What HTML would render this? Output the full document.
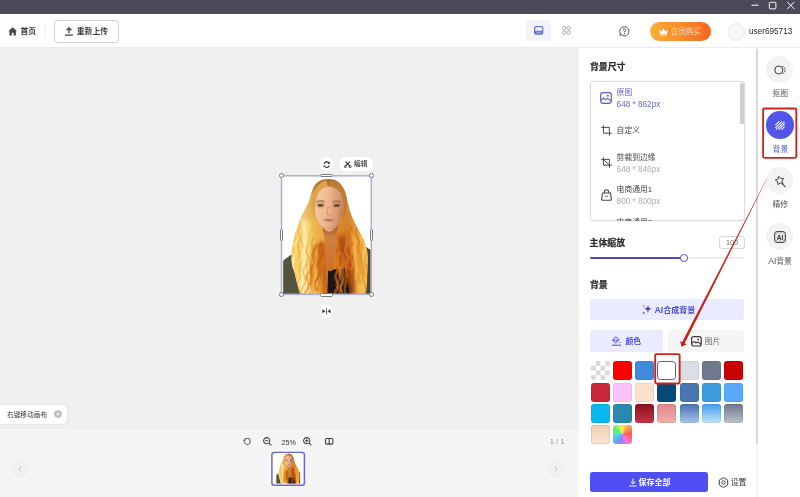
<!DOCTYPE html>
<html lang="zh-CN">
<head>
<meta charset="utf-8">
<title>抠图 - 背景</title>
<style>
*{box-sizing:border-box;margin:0;padding:0}
html,body{width:800px;height:497px;overflow:hidden;background:#f0f0f0}
body{position:relative;will-change:transform;font-family:"Liberation Sans","Noto Sans CJK SC",sans-serif;font-size:7.8px;color:#333;line-height:1}
.abs{position:absolute}
.t{position:absolute;white-space:nowrap;line-height:1;margin-top:.8px}
svg{position:absolute;overflow:visible}
/* frame */
#titlebar{left:0;top:0;width:800px;height:14px;background:#4a4a59}
#header{left:0;top:14px;width:800px;height:34px;background:#fff;border-bottom:1px solid #ebebeb}
#canvas{left:0;top:48px;width:579px;height:379.5px;background:#f0f0f0}
#bottombar{left:0;top:427.5px;width:579px;height:70px;background:#f5f5f5;border-top:1px solid #ededed}
#panel{left:579px;top:48px;width:178px;height:449px;background:#fff}
#sidebar{left:757px;top:48px;width:43px;height:449px;background:#fff;border-left:1px solid #efefef}
.b{font-weight:bold}
.h{font-size:8.9px;font-weight:bold;color:#2b2b2b;-webkit-text-stroke:.22px #2b2b2b;margin-left:-.4px;margin-top:.45px}
.purple{color:#6468c8}
.gray{color:#aaa}
.hd{width:4.8px;height:4.8px;border-radius:50%;background:#fff;border:.8px solid #777}
.hp{background:#fff;border:.8px solid #777;border-radius:1.6px}
</style>
</head>
<body>
<div class="abs" id="titlebar"></div>
<div class="abs" id="header"></div>
<div class="abs" id="canvas"></div>
<div class="abs" id="bottombar"></div>
<div class="abs" id="panel"></div>
<div class="abs" id="sidebar"></div>

<!-- ============ TITLE BAR CONTROLS ============ -->
<svg style="left:748px;top:0" width="52" height="14" viewBox="0 0 52 14">
  <path d="M3.5 5.2H10.5" stroke="#fff" stroke-width="1" fill="none"/>
  <rect x="21.3" y="2.3" width="6.6" height="6.6" rx="1" stroke="#fff" stroke-width="1" fill="none"/>
  <path d="M39.2 1.8L46.4 9M46.4 1.8L39.2 9" stroke="#fff" stroke-width="1" fill="none"/>
</svg>

<!-- ============ HEADER ============ -->
<svg style="left:8.3px;top:27px" width="9.3" height="9" viewBox="0 0 9 9">
  <path d="M4.5 0.2L0.1 4.2H1.3V8.6H3.6V5.8H5.4V8.6H7.7V4.2H8.9Z" fill="#444"/>
</svg>
<div class="t b" style="left:20.5px;top:27.4px;color:#3a3a3a">首页</div>
<div class="abs" style="left:45px;top:25px;width:1px;height:13px;background:#f0f0f0"></div>
<div class="abs" style="left:53.8px;top:20px;width:64.8px;height:22.5px;border:1px solid #d0d0d0;border-radius:3.5px;background:#fff"></div>
<svg style="left:65px;top:27px" width="8" height="9" viewBox="0 0 8 9">
  <path d="M4 6.2V0.9M1.5 3.3L4 0.8L6.5 3.3M0 8.2H8" stroke="#3c3c3c" stroke-width="1.25" fill="none"/>
</svg>
<div class="t b" style="left:76.8px;top:27.4px;color:#3a3a3a">重新上传</div>

<!-- view toggles -->
<div class="abs" style="left:526px;top:20.3px;width:24.7px;height:20.5px;background:#f3f4fa;border-radius:2.5px"></div>
<svg style="left:533.8px;top:26.2px" width="9.4" height="8.8" viewBox="0 0 9.4 8.8">
  <rect x=".65" y=".65" width="8.1" height="7.4" rx="1.4" stroke="#6a6ecb" stroke-width="1.2" fill="none"/>
  <rect x=".65" y="4.7" width="8.1" height="3.4" fill="#6a6ecb"/>
  <path d="M3 5.6V7.4M4.7 5.6V7.4M6.4 5.6V7.4" stroke="#eceefa" stroke-width=".6"/>
</svg>
<svg style="left:562.1px;top:26.4px" width="9" height="9" viewBox="0 0 9 9">
  <g stroke="#9a9a9a" stroke-width=".8" fill="none">
    <circle cx="2.2" cy="2.2" r="1.7"/><circle cx="6.6" cy="2.2" r="1.7"/>
    <circle cx="2.2" cy="6.6" r="1.7"/><circle cx="6.6" cy="6.6" r="1.7"/>
  </g>
</svg>
<!-- help -->
<svg style="left:619.1px;top:26.1px" width="11" height="11" viewBox="0 0 11 11">
  <path d="M5.5 0.7A4.6 4.6 0 1 1 2.3 8.7L0.9 9.6L1.4 7.7A4.6 4.6 0 0 1 5.5 0.7Z" stroke="#444" stroke-width=".9" fill="none"/>
  <path d="M4.2 4.2A1.3 1.3 0 1 1 5.5 5.5V6.3" stroke="#444" stroke-width=".9" fill="none"/>
  <circle cx="5.5" cy="7.6" r=".55" fill="#444"/>
</svg>
<!-- vip button -->
<div class="abs" style="left:649.5px;top:22px;width:61px;height:18.5px;border-radius:9.5px;background:linear-gradient(90deg,#fbae38 0%,#f98c2a 50%,#f5661e 100%)"></div>
<svg style="left:658.5px;top:27.5px" width="9" height="8" viewBox="0 0 9 8">
  <path d="M0.3 1.8L2.4 3.6L4.5 0.6L6.6 3.6L8.7 1.8L7.8 6H1.2Z" fill="#fff"/>
  <rect x="1.2" y="6.5" width="6.6" height=".9" fill="#fff"/>
</svg>
<div class="t" style="left:670.5px;top:27.5px;color:rgba(255,255,255,.95);font-size:7.7px;font-weight:300">会员购买</div>
<!-- avatar -->
<div class="abs" style="left:727.5px;top:23px;width:17.5px;height:17.5px;border-radius:50%;background:#f5f5f5;border:1px solid #ebebeb"></div>
<svg style="left:731px;top:27px" width="11" height="10" viewBox="0 0 11 10">
  <path d="M5.5 0.8C8.2 0.8 10 2.6 10 5C10 7.4 8.2 9 5.5 9C2.8 9 1 7.4 1 5C1 2.6 2.8 0.8 5.5 0.8Z" stroke="#fff" stroke-width=".9" fill="none"/>
  <path d="M3.2 5.3L4.2 4.3L5.5 5.4L6.8 4.3L7.8 5.3" stroke="#fff" stroke-width=".8" fill="none"/>
</svg>
<div class="t" style="left:749px;top:27.2px;font-size:8.2px;color:#262626">user695713</div>

<!-- ============ RIGHT PANEL ============ -->
<div class="t h" style="left:590.4px;top:62.8px">背景尺寸</div>
<div class="abs" style="left:589.8px;top:81.2px;width:154.8px;height:140px;border:1px solid #dcdcdc;border-radius:3px;background:#fff;overflow:hidden;box-shadow:0 0 2px rgba(0,0,0,.08)"></div>
<div class="abs" style="left:740.4px;top:83.4px;width:3.4px;height:40.6px;background:#cfcfcf;border-radius:2px 2px 0 0"></div>
<!-- item1 -->
<svg style="left:600.4px;top:92.2px" width="12" height="12" viewBox="0 0 12 12">
  <rect x=".7" y=".7" width="10.6" height="10.6" rx="2.2" stroke="#5a5ec4" stroke-width="1.2" fill="none"/>
  <path d="M.9 8.4L3.6 6L5.6 7.8L7.6 6.4L11 9" stroke="#5a5ec4" stroke-width="1.1" fill="none"/>
  <circle cx="7.9" cy="3.8" r="1" fill="#5a5ec4"/>
</svg>
<div class="t purple" style="left:616.6px;top:88.3px">原图</div>
<div class="t purple" style="left:616.6px;top:100.2px;font-size:8.2px">648 * 862px</div>
<!-- item2 -->
<svg style="left:600.6px;top:125px" width="11" height="11" viewBox="0 0 11 11">
  <path d="M2.4 0.2V8.2H10.8M0.2 2.4H8.4V10.8" stroke="#4a4a4a" stroke-width="1" fill="none"/>
</svg>
<div class="t" style="left:616.6px;top:126.6px;color:#444">自定义</div>
<!-- item3 -->
<svg style="left:600.6px;top:157.4px" width="11" height="11" viewBox="0 0 11 11">
  <path d="M2.4 0.2V8.2H10.8M0.2 2.4H8.4V10.8M2.6 2.6L8.2 8" stroke="#4a4a4a" stroke-width="1" fill="none"/>
</svg>
<div class="t" style="left:616.6px;top:153px;color:#444">剪裁到边缘</div>
<div class="t gray" style="left:616.6px;top:164.9px;font-size:8.2px">648 * 846px</div>
<!-- item4 -->
<svg style="left:600.6px;top:189.2px" width="11" height="12" viewBox="0 0 11 12">
  <path d="M1.6 4H9.4L10.4 10.2A1 1 0 0 1 9.4 11.3H1.6A1 1 0 0 1 .6 10.2Z" stroke="#444" stroke-width="1.1" fill="none"/>
  <path d="M3.4 4V2.8A2.1 2.1 0 0 1 7.6 2.8V4" stroke="#444" stroke-width="1.1" fill="none"/>
  <path d="M3.8 6.8Q5.5 8.6 7.2 6.8" stroke="#444" stroke-width=".9" fill="none"/>
</svg>
<div class="t" style="left:616.6px;top:185.4px;color:#444">电商通用1</div>
<div class="t gray" style="left:616.6px;top:197.3px;font-size:8.2px">800 * 800px</div>
<!-- item5 (clipped) -->
<div class="abs" style="left:616.6px;top:217px;width:60px;height:3.6px;overflow:hidden"><div class="t" style="left:0;top:1.1px;color:#444">电商通用2</div></div>

<!-- scale -->
<div class="t h" style="left:590px;top:238.4px">主体缩放</div>
<div class="abs" style="left:719.2px;top:236.2px;width:25.4px;height:12.8px;border:1px solid #d6d6d6;border-radius:3px;background:#fff"></div>
<div class="t" style="left:726px;top:238.2px;font-size:7.2px;color:#707070">100</div>
<div class="abs" style="left:590px;top:257.2px;width:154.4px;height:1.8px;background:#ececec;border-radius:1px"></div>
<div class="abs" style="left:590px;top:257px;width:92px;height:2.2px;background:#4a4eb4;border-radius:1px"></div>
<div class="abs" style="left:680.4px;top:254.2px;width:7.6px;height:7.6px;border-radius:50%;background:#fff;border:1.1px solid #4a4eb4"></div>

<!-- background -->
<div class="t h" style="left:590.4px;top:280.4px">背景</div>
<div class="abs" style="left:589.9px;top:299.1px;width:154.2px;height:20.8px;background:#ebebff;border-radius:2px"></div>
<svg style="left:641.6px;top:304.4px" width="10" height="11" viewBox="0 0 10 11">
  <path d="M6 0.2C6.35 3.3 7.1 4.1 10 4.8C7.1 5.5 6.35 6.3 6 9.4C5.65 6.3 4.9 5.5 2 4.8C4.9 4.1 5.65 3.3 6 0.2Z" fill="#4a4ad2"/>
  <path d="M1.7 7.2C1.8 8.3 2.2 8.7 3.3 8.9C2.2 9.1 1.8 9.5 1.7 10.6C1.6 9.5 1.2 9.1 .1 8.9C1.2 8.7 1.6 8.3 1.7 7.2Z" fill="#4a4ad2"/>
  <circle cx="1.7" cy="2" r=".7" fill="#4a4ad2"/>
</svg>
<div class="t b" style="left:654.4px;top:305.6px;font-size:8px;color:#4a4ad2"><span style="font-size:8.8px">AI</span>合成背景</div>
<!-- tabs -->
<div class="abs" style="left:589.9px;top:329.9px;width:72.8px;height:22px;background:#ebebff;border-radius:2px"></div>
<div class="abs" style="left:667.5px;top:329.9px;width:76.6px;height:22px;background:#f5f5f6;border-radius:2px"></div>
<svg style="left:612.4px;top:336.4px" width="9" height="10" viewBox="0 0 9 10">
  <path d="M3.9 0.6L7 3.8L3.6 7.1L0.6 4.1L3.9 .9" stroke="#4a4ad2" stroke-width="1" fill="none"/>
  <path d="M.8 4.2H6.6" stroke="#4a4ad2" stroke-width=".9"/>
  <path d="M8 5.4C8.6 6.4 8.7 6.8 8 7.2C7.3 6.8 7.4 6.4 8 5.4Z" fill="#4a4ad2"/>
  <path d="M0 9.2H9" stroke="#4a4ad2" stroke-width="1"/>
</svg>
<div class="t b" style="left:625.5px;top:337.2px;color:#4a4ad2">颜色</div>
<svg style="left:691.2px;top:335.6px" width="11" height="11" viewBox="0 0 11 11">
  <rect x=".6" y=".6" width="9.6" height="9.4" rx="2" stroke="#3a3a3a" stroke-width="1.2" fill="none"/>
  <path d="M.8 7.4L3.2 5.4L5 7L6.8 5.8L10 8.2" stroke="#3a3a3a" stroke-width="1.1" fill="none"/>
  <circle cx="7.2" cy="3.4" r=".9" fill="#444"/>
</svg>
<div class="t" style="left:704.8px;top:337.2px;color:#6a6a6a">图片</div>
<!-- swatches -->
<div class="abs" style="left:591.2px;top:361.3px;width:19px;height:19px;border-radius:3.2px;background:#fff conic-gradient(#d9d9d9 25%,#fff 0 50%,#d9d9d9 0 75%,#fff 0) 0 0/9.5px 9.5px"></div>
<div class="abs" style="left:613.3px;top:361.3px;width:19px;height:19px;border-radius:3.2px;background:#ff0000;box-shadow:inset 0 0 0 .5px rgba(0,0,0,.12)"></div>
<div class="abs" style="left:635.3px;top:361.3px;width:19px;height:19px;border-radius:3.2px;background:#3e8bd9;box-shadow:inset 0 0 0 .5px rgba(0,0,0,.12)"></div>
<div class="abs" style="left:657.4px;top:361.3px;width:19px;height:19px;border-radius:3.2px;background:#fff;border:1px solid #5656cc"></div>
<div class="abs" style="left:679.5px;top:361.3px;width:19px;height:19px;border-radius:3.2px;background:#dddde5;box-shadow:inset 0 0 0 .5px rgba(0,0,0,.12)"></div>
<div class="abs" style="left:701.6px;top:361.3px;width:19px;height:19px;border-radius:3.2px;background:#6f788d;box-shadow:inset 0 0 0 .5px rgba(0,0,0,.12)"></div>
<div class="abs" style="left:723.6px;top:361.3px;width:19px;height:19px;border-radius:3.2px;background:#c90000;box-shadow:inset 0 0 0 .5px rgba(0,0,0,.12)"></div>
<div class="abs" style="left:591.2px;top:382.6px;width:19px;height:19px;border-radius:3.2px;background:#c82737;box-shadow:inset 0 0 0 .5px rgba(0,0,0,.12)"></div>
<div class="abs" style="left:613.3px;top:382.6px;width:19px;height:19px;border-radius:3.2px;background:#ffc1ff;box-shadow:inset 0 0 0 .5px rgba(0,0,0,.12)"></div>
<div class="abs" style="left:635.3px;top:382.6px;width:19px;height:19px;border-radius:3.2px;background:#fde1cd;box-shadow:inset 0 0 0 .5px rgba(0,0,0,.12)"></div>
<div class="abs" style="left:657.4px;top:382.6px;width:19px;height:19px;border-radius:3.2px;background:#03497a;box-shadow:inset 0 0 0 .5px rgba(0,0,0,.12)"></div>
<div class="abs" style="left:679.5px;top:382.6px;width:19px;height:19px;border-radius:3.2px;background:#4876b2;box-shadow:inset 0 0 0 .5px rgba(0,0,0,.12)"></div>
<div class="abs" style="left:701.6px;top:382.6px;width:19px;height:19px;border-radius:3.2px;background:#3b9bdd;box-shadow:inset 0 0 0 .5px rgba(0,0,0,.12)"></div>
<div class="abs" style="left:723.6px;top:382.6px;width:19px;height:19px;border-radius:3.2px;background:#59a9fd;box-shadow:inset 0 0 0 .5px rgba(0,0,0,.12)"></div>
<div class="abs" style="left:591.2px;top:403.9px;width:19px;height:19px;border-radius:3.2px;background:#07b9ee;box-shadow:inset 0 0 0 .5px rgba(0,0,0,.12)"></div>
<div class="abs" style="left:613.3px;top:403.9px;width:19px;height:19px;border-radius:3.2px;background:#2989b1;box-shadow:inset 0 0 0 .5px rgba(0,0,0,.12)"></div>
<div class="abs" style="left:635.3px;top:403.9px;width:19px;height:19px;border-radius:3.2px;background:linear-gradient(180deg,#8a0f1e,#c83444);box-shadow:inset 0 0 0 .5px rgba(0,0,0,.12)"></div>
<div class="abs" style="left:657.4px;top:403.9px;width:19px;height:19px;border-radius:3.2px;background:linear-gradient(180deg,#e0858c,#f3adad);box-shadow:inset 0 0 0 .5px rgba(0,0,0,.12)"></div>
<div class="abs" style="left:679.5px;top:403.9px;width:19px;height:19px;border-radius:3.2px;background:linear-gradient(180deg,#4770b2,#a6c4ea);box-shadow:inset 0 0 0 .5px rgba(0,0,0,.12)"></div>
<div class="abs" style="left:701.6px;top:403.9px;width:19px;height:19px;border-radius:3.2px;background:linear-gradient(180deg,#3f9fe8,#c6e3fd);box-shadow:inset 0 0 0 .5px rgba(0,0,0,.12)"></div>
<div class="abs" style="left:723.6px;top:403.9px;width:19px;height:19px;border-radius:3.2px;background:linear-gradient(180deg,#6e768a,#bcc0cc);box-shadow:inset 0 0 0 .5px rgba(0,0,0,.12)"></div>
<div class="abs" style="left:591.2px;top:425.2px;width:19px;height:19px;border-radius:3.2px;background:linear-gradient(180deg,#efd0b2,#fde6d4);box-shadow:inset 0 0 0 .6px rgba(120,80,50,.28)"></div>
<div class="abs" style="left:613.3px;top:425.2px;width:19px;height:19px;border-radius:3.2px;background:conic-gradient(from 0deg at 50% 48%,#ffe860 0deg,#ff9c50 40deg,#ff5a5a 90deg,#ff7ad8 150deg,#a07aff 190deg,#5aa8ff 225deg,#5ae0d0 265deg,#5af07a 305deg,#c8f860 340deg,#ffe860 360deg)"></div>
<!-- save -->
<div class="abs" style="left:589.9px;top:471.7px;width:118.4px;height:20.4px;background:#4f4ff4;border-radius:2.5px"></div>
<svg style="left:629px;top:478px" width="8" height="9" viewBox="0 0 8 9">
  <path d="M4 0.4V5.8M1.6 3.6L4 6L6.4 3.6M0.4 8H7.6" stroke="#fff" stroke-width="1" fill="none"/>
</svg>
<div class="t b" style="left:638.4px;top:477.8px;color:#fff;font-size:8px">保存全部</div>
<svg style="left:718px;top:477px" width="11" height="11" viewBox="0 0 11 11">
  <path d="M5.5 0.6L9.7 3V8L5.5 10.4L1.3 8V3Z" stroke="#444" stroke-width="1" fill="none" stroke-linejoin="round"/>
  <circle cx="5.5" cy="5.5" r="1.7" stroke="#444" stroke-width="1" fill="none"/>
</svg>
<div class="t" style="left:730.8px;top:478px;color:#333">设置</div>
<!-- panel scrollbar -->
<div class="abs" style="left:755.6px;top:48.5px;width:2.1px;height:395.5px;background:#d9d9d9"></div>

<!-- ============ SIDEBAR ============ -->
<!-- item1 抠图 -->
<div class="abs" style="left:766.1px;top:55.5px;width:27.4px;height:27.4px;border-radius:50%;background:#f3f3f5"></div>
<svg style="left:773.6px;top:64.6px" width="13" height="10" viewBox="0 0 13 10">
  <circle cx="4.8" cy="5" r="4" stroke="#3a3a3a" stroke-width="1" fill="none"/>
  <path d="M8.2 1.2A4 4 0 0 1 8.2 8.8" stroke="#3a3a3a" stroke-width=".9" fill="none" stroke-dasharray="1.6 1"/>
  <path d="M10.6 2.4A4 4 0 0 1 10.6 7.6" stroke="#8a8a8a" stroke-width=".7" fill="none" stroke-dasharray="1.2 1"/>
</svg>
<div class="t" style="left:772.4px;top:89px;color:#555">抠图</div>
<!-- item2 背景 (active) -->
<div class="abs" style="left:766.2px;top:111.4px;width:27.4px;height:27.4px;border-radius:50%;background:#5355e8"></div>
<svg style="left:775px;top:120.9px" width="10" height="9.1" viewBox="0 0 11 10">
  <path d="M.4 4.6L4.6 .4M.4 7.6L7.6 .4M1.2 9.6L10.4 .6M4 9.6L10.6 3M7 9.6L10.6 6" stroke="#f4f4ff" stroke-width="1.15" fill="none"/>
</svg>
<div class="t" style="left:772.6px;top:145.2px;color:#5a60c8">背景</div>
<!-- item3 精修 -->
<div class="abs" style="left:766.1px;top:167.1px;width:27.4px;height:27.4px;border-radius:50%;background:#f3f3f5"></div>
<svg style="left:774.6px;top:175.6px" width="11" height="12" viewBox="0 0 11 12">
  <path d="M3.79 0.30L5.66 2.45L8.51 2.40L7.04 4.85L7.97 7.54L5.19 6.90L2.91 8.62L2.66 5.78L0.32 4.14L2.95 3.03Z" stroke="#3a3a3a" stroke-width=".95" fill="none" stroke-linejoin="round"/>
  <path d="M7.2 7.8L10.2 10.6" stroke="#3a3a3a" stroke-width="1.05" fill="none" stroke-linecap="round"/>
</svg>
<div class="t" style="left:772.4px;top:200.6px;color:#555">精修</div>
<!-- item4 AI背景 -->
<div class="abs" style="left:766.1px;top:222.8px;width:27.4px;height:27.4px;border-radius:50%;background:#f3f3f5"></div>
<svg style="left:773.6px;top:230.6px" width="12" height="12" viewBox="0 0 12 12">
  <rect x=".6" y=".6" width="10.8" height="10.8" rx="2.4" stroke="#3a3a3a" stroke-width="1" fill="none"/>
  <path d="M1 4.4L4.4 1M1 7.6L7.6 1M1.6 10.6L10.6 1.6M4.6 11L11 4.6M7.8 11L11 7.8" stroke="#6a6a6a" stroke-width=".6" fill="none"/>
  <rect x="2.2" y="3.4" width="7.6" height="5.4" fill="#f3f3f5" opacity=".75"/>
  <text x="6" y="8.5" font-family="Liberation Sans,sans-serif" font-size="6.6" font-weight="bold" text-anchor="middle" fill="#333">AI</text>
</svg>
<div class="t" style="left:768.2px;top:255.8px;color:#555"><span style="font-size:8.6px">AI</span>背景</div>
<!-- red highlight on item2 -->
<svg style="left:0;top:0" width="800" height="497" viewBox="0 0 800 497"><rect x="763.1" y="108.5" width="33.2" height="49.3" rx="1.2" fill="none" stroke="#cf221d" stroke-width="1.8"/></svg>

<!-- ============ CANVAS ============ -->
<div class="abs" style="left:319.5px;top:157.3px;width:13.8px;height:13.8px;border-radius:50%;background:#fff"></div>
<svg style="left:322.7px;top:160.7px" width="7.4" height="7.4" viewBox="0 0 8 8">
  <path d="M1.15 3.1A3 3 0 0 1 6.5 2.3M6.85 4.9A3 3 0 0 1 1.5 5.7" stroke="#2e2e2e" stroke-width="1.25" fill="none"/>
  <path d="M7.3 .9V3.2H5ZM.7 7.1V4.8H3Z" fill="#2e2e2e"/>
</svg>
<div class="abs" style="left:338.9px;top:157.3px;width:34.3px;height:13.8px;border-radius:7px;background:#fff"></div>
<svg style="left:344.2px;top:160.6px" width="7.4" height="7" viewBox="0 0 7.4 7">
  <path d="M1.4 .6L5.8 4.9M6 .6L1.6 4.9" stroke="#2e2e2e" stroke-width="1.15" fill="none"/>
  <circle cx="1.3" cy="5.6" r="1" stroke="#2e2e2e" stroke-width=".9" fill="none"/>
  <circle cx="6.1" cy="5.6" r="1" stroke="#2e2e2e" stroke-width=".9" fill="none"/>
</svg>
<div class="t" style="left:354.1px;top:160.7px;font-size:6.7px;color:#2e2e2e;font-weight:500">编辑</div>
<!--P1--><svg style="left:281.5px;top:175.7px" width="89.8" height="118.6" viewBox="0 0 90 118.6" preserveAspectRatio="none">
<defs>
<filter id="bla" x="-5%" y="-5%" width="110%" height="110%"><feGaussianBlur stdDeviation="0.7"/></filter>
<filter id="sfa" x="-30%" y="-30%" width="160%" height="160%"><feGaussianBlur stdDeviation="2.2"/></filter>
<clipPath id="cpa"><rect x="0" y="0" width="90" height="118.6"/></clipPath>
<clipPath id="hca"><path d="M44.2 3.3C39.5 3.6 35 6 32.4 10C30 14.6 28.6 19.6 27.4 24.5C26 28.4 23.6 31.6 21.8 35.7C20 40 17.6 43.6 16.4 48.3C15 53 13.6 55.6 12.8 59.4C11.8 64 11 67.6 10.4 71.5C9.6 76 9.4 79 9.6 84C9.8 89 11 92 12.4 96C13.6 101 14.6 105 15.6 109C16.6 113 17.6 116 18.5 118.6H84C84.6 112 85.4 106 85.4 100C85.6 92 86.6 82 85.4 75C84.4 70 82.4 65 80.4 61.3C78.4 57 75.8 53 74 49.3C71.8 45 70 41 68.6 36.7C67.2 32 66.2 28 65.2 24.3C64.2 20 63.4 17 62 14C60.4 10 57.6 6.4 54 4.6C51 3.2 48 3 44.2 3.3Z"/></clipPath>
<linearGradient id="hga" x1="0" y1="0" x2="1" y2="0">
<stop offset="0" stop-color="#f9de8c"/><stop offset=".24" stop-color="#f6cc62"/><stop offset=".36" stop-color="#f0b044"/><stop offset=".5" stop-color="#e4942e"/><stop offset=".62" stop-color="#d0741e"/><stop offset=".76" stop-color="#c8681a"/><stop offset=".86" stop-color="#ea9e34"/><stop offset="1" stop-color="#f4bc54"/>
</linearGradient>
<linearGradient id="tga" x1="0" y1="0" x2="0" y2="1">
<stop offset="0" stop-color="#a8652a" stop-opacity=".95"/><stop offset=".16" stop-color="#cf9344" stop-opacity=".85"/><stop offset=".4" stop-color="#e6ad50" stop-opacity=".35"/><stop offset=".7" stop-color="#e0a040" stop-opacity="0"/>
</linearGradient>
<linearGradient id="ska" x1="0" y1="0" x2="1" y2=".2">
<stop offset="0" stop-color="#f6cba6"/><stop offset=".5" stop-color="#efb892"/><stop offset="1" stop-color="#cf8d66"/>
</linearGradient>
<linearGradient id="nka" x1="0" y1="0" x2="0" y2="1">
<stop offset="0" stop-color="#9c5226"/><stop offset=".3" stop-color="#d08040"/><stop offset="1" stop-color="#c87030"/>
</linearGradient>
</defs>
<rect x="0" y="0" width="90" height="118.6" fill="#fff"/>
<g clip-path="url(#cpa)"><g filter="url(#bla)">
<path d="M1.2 84.5L8 79.5L15 76L22 84L26 118.6H1.2Z" fill="#55523e"/>
<path d="M83 70L88.8 74V118.6H80Z" fill="#48452f"/>
<path d="M44.2 3.3C39.5 3.6 35 6 32.4 10C30 14.6 28.6 19.6 27.4 24.5C26 28.4 23.6 31.6 21.8 35.7C20 40 17.6 43.6 16.4 48.3C15 53 13.6 55.6 12.8 59.4C11.8 64 11 67.6 10.4 71.5C9.6 76 9.4 79 9.6 84C9.8 89 11 92 12.4 96C13.6 101 14.6 105 15.6 109C16.6 113 17.6 116 18.5 118.6H84C84.6 112 85.4 106 85.4 100C85.6 92 86.6 82 85.4 75C84.4 70 82.4 65 80.4 61.3C78.4 57 75.8 53 74 49.3C71.8 45 70 41 68.6 36.7C67.2 32 66.2 28 65.2 24.3C64.2 20 63.4 17 62 14C60.4 10 57.6 6.4 54 4.6C51 3.2 48 3 44.2 3.3Z" fill="url(#hga)"/>
<path d="M44.2 3.3C39.5 3.6 35 6 32.4 10C30 14.6 28.6 19.6 27.4 24.5C26 28.4 23.6 31.6 21.8 35.7C20 40 17.6 43.6 16.4 48.3C15 53 13.6 55.6 12.8 59.4C11.8 64 11 67.6 10.4 71.5C9.6 76 9.4 79 9.6 84C9.8 89 11 92 12.4 96C13.6 101 14.6 105 15.6 109C16.6 113 17.6 116 18.5 118.6H84C84.6 112 85.4 106 85.4 100C85.6 92 86.6 82 85.4 75C84.4 70 82.4 65 80.4 61.3C78.4 57 75.8 53 74 49.3C71.8 45 70 41 68.6 36.7C67.2 32 66.2 28 65.2 24.3C64.2 20 63.4 17 62 14C60.4 10 57.6 6.4 54 4.6C51 3.2 48 3 44.2 3.3Z" fill="url(#tga)"/>
<g clip-path="url(#hca)"><g filter="url(#sfa)">
<path d="M16 46C13 60 10 76 10 90C11 100 14 110 19 118.6H31C27 106 26 92 28 78C29 66 27 56 25 42Z" fill="#fdeeb0" opacity=".85"/>
<path d="M24 14C21 24 19 34 20 44C23 40 26 30 31 18Z" fill="#f6d282" opacity=".8"/>
<path d="M72 56C78 62 84 70 87 80V118.6H74C76 104 75 90 72 80C70 70 70 62 72 56Z" fill="#f8c458" opacity=".8"/>
<path d="M36 66C34 78 35 90 38 100C40 108 40 114 40 118.6H48C47 108 46.4 99 46 91C45.4 82 45 74 44 66Z" fill="#b8500f" opacity=".75"/>
<path d="M55 62C55 72 56 80 58 88C60 96 62 104 62 118.6H74C75 104 73 92 70 82C67 74 65 66 64 58Z" fill="#aa4410" opacity=".8"/>
<path d="M62 90C66 98 70 106 71 118.6H63C63 108 61 98 59 92Z" fill="#4a2008" opacity=".6"/>
</g></g>
<path d="M46.2 95L50 93.6L63 92.4L68 118.6H45.5Z" fill="#1b1814"/>
<path d="M39.6 47L43.6 66L46.4 92L48.4 95.4L52 93.6L53 68L56.4 47Z" fill="url(#nka)"/>
<path d="M35 17C37.6 12.6 41.8 10.4 46.6 10.4C51.8 10.4 56.6 12.6 59 17C61 21 61.4 26 61.2 31C61 36 60.2 41 57.8 46C55.6 50 52 54.8 47.4 55.8C43.4 55.2 39.8 51 37.2 46.6C34.4 42 33 37 32.4 32C31.8 26 32.6 21 35 17Z" fill="url(#ska)"/>
<path d="M44 4C38 6 33 12 31 20C29.6 28 30.2 36 32.4 44C32.8 36 33 28 34.8 21C36.8 15 41 11.4 46 10Z" fill="#dda24e"/>
<path d="M48 4C56 5 62 10 64 18C65.6 26 64.8 36 61.2 46C61.8 38 62.2 30 61 23C59.8 16 55 11.4 47 10Z" fill="#bf7a36"/>
<ellipse cx="38.8" cy="28.6" rx="4.6" ry="2.8" fill="#b47a50" opacity=".38"/>
<ellipse cx="55" cy="29" rx="4.6" ry="2.8" fill="#b47a50" opacity=".42"/>
<path d="M57 34C59 38 58 44 54 50C58 46 61 40 61 32Z" fill="#b87850" opacity=".5"/>
<path d="M34.4 25.8Q38.4 23.8 42.8 25.6" stroke="#94643c" stroke-width="1.1" fill="none"/>
<path d="M50.8 25.8Q55.2 24 59.2 26" stroke="#94643c" stroke-width="1.1" fill="none"/>
<ellipse cx="38.6" cy="29.4" rx="3" ry="1.5" fill="#59402c"/>
<ellipse cx="55" cy="29.8" rx="3" ry="1.5" fill="#59402c"/>
<ellipse cx="38.6" cy="31.4" rx="3.4" ry="1.2" fill="#d9a07a" opacity=".7"/>
<ellipse cx="55" cy="31.8" rx="3.4" ry="1.2" fill="#d9a07a" opacity=".7"/>
<path d="M46.4 30C45.8 34 45.2 36.2 44.6 38.2Q47 39.6 49.6 38.2" stroke="#cc8e66" stroke-width=".9" fill="none"/>
<path d="M41.2 44Q44.4 42.2 46.6 43Q49 42.2 52.2 44Q47 47.6 41.2 44Z" fill="#c27668"/>
<path d="M40 50Q47 57 55 49" stroke="#c98a62" stroke-width="1" fill="none" opacity=".6"/>
<g clip-path="url(#hca)">
<path d="M14.8 58.7 L13.9 60.9 L13.4 63.1 L13.2 65.3 L13.4 67.5 L13.6 69.7 L13.5 71.9 L12.9 74.1 L12.1 76.3 L11.2 78.5 L10.6 80.7 L10.4 82.9 L10.6 85.1 L10.8 87.3 L10.7 89.5 L10.2 91.7 L9.3 93.9 L8.4 96.1 L7.8 98.3 L7.6 100.5 L7.7 102.7" stroke="#fdea9e" stroke-width="1.3" fill="none" opacity=".5" stroke-linecap="round"/>
<path d="M17.3 54.9 L16.9 57.1 L16.8 59.3 L17.2 61.5 L17.6 63.7 L17.9 65.9 L17.8 68.1 L17.3 70.3 L16.7 72.5 L16.2 74.7 L16.0 76.9 L16.3 79.1 L16.7 81.3 L17.1 83.5 L17.1 85.7 L16.7 87.9 L16.0 90.1 L15.4 92.3 L15.2 94.5 L15.4 96.7 L15.8 98.9 L16.2 101.1 L16.3 103.3 L16.0 105.5 L15.4 107.7 L14.8 109.9 L14.4 112.1 L14.5 114.3 L14.9 116.5 L15.4 118.7" stroke="#fdea9e" stroke-width="2.1" fill="none" opacity=".5" stroke-linecap="round"/>
<path d="M40.3 80.6 L40.8 82.8 L41.5 85.0 L41.5 87.2 L40.7 89.4 L39.5 91.6 L38.8 93.8 L39.0 96.0 L39.6 98.2 L40.0 100.4 L39.6 102.6 L38.6 104.8 L37.5 107.0 L37.2 109.2 L37.7 111.4 L38.4 113.6" stroke="#e8952c" stroke-width="1.4" fill="none" opacity=".5" stroke-linecap="round"/>
<path d="M60.0 77.1 L60.6 79.3 L61.6 81.5 L62.6 83.7 L63.1 85.9 L63.0 88.1 L62.3 90.3 L61.6 92.5 L61.3 94.7 L61.7 96.9 L62.6 99.1 L63.7 101.3 L64.4 103.5 L64.5 105.7 L64.1 107.9 L63.3 110.1 L62.8 112.3 L62.8 114.5 L63.5 116.7 L64.6 118.9" stroke="#e07e22" stroke-width="2.1" fill="none" opacity=".5" stroke-linecap="round"/>
<path d="M18.6 64.2 L19.6 66.4 L20.5 68.6 L20.5 70.8 L19.4 73.0 L18.1 75.2 L17.3 77.4 L17.7 79.6 L18.7 81.8 L19.6 84.0 L19.4 86.2 L18.3 88.4 L17.0 90.6 L16.3 92.8 L16.8 95.0 L17.8 97.2 L18.6 99.4 L18.4 101.6 L17.2 103.8 L15.9 106.0 L15.3 108.2 L15.9 110.4 L16.9 112.6 L17.6 114.8 L17.3 117.0" stroke="#e8952c" stroke-width="1.7" fill="none" opacity=".5" stroke-linecap="round"/>
<path d="M58.0 78.2 L58.6 80.4 L59.4 82.6 L60.2 84.8 L60.7 87.0 L60.6 89.2 L60.1 91.4 L59.8 93.6 L59.9 95.8 L60.5 98.0 L61.3 100.2 L62.1 102.4 L62.5 104.6 L62.3 106.8 L61.9 109.0" stroke="#c45a12" stroke-width="1.7" fill="none" opacity=".5" stroke-linecap="round"/>
<path d="M26.2 64.3 L26.6 66.5 L26.3 68.7 L25.5 70.9 L24.9 73.1 L25.0 75.3 L25.6 77.5 L26.1 79.7 L26.0 81.9 L25.3 84.1 L24.6 86.3 L24.4 88.5 L24.9 90.7 L25.6 92.9 L25.7 95.1 L25.1 97.3 L24.3 99.5 L24.0 101.7 L24.3 103.9" stroke="#f2b43e" stroke-width="2.2" fill="none" opacity=".5" stroke-linecap="round"/>
<path d="M83.1 44.8 L83.3 47.0 L83.0 49.2 L82.4 51.4 L81.9 53.6 L81.7 55.8 L82.1 58.0 L82.9 60.2 L83.8 62.4 L84.4 64.6 L84.5 66.8 L84.0 69.0 L83.4 71.2 L83.0 73.4 L83.0 75.6" stroke="#f9d266" stroke-width="2.0" fill="none" opacity=".5" stroke-linecap="round"/>
<path d="M19.8 62.1 L18.9 64.3 L17.9 66.5 L17.2 68.7 L17.0 70.9 L17.2 73.1 L17.5 75.3 L17.9 77.5 L17.9 79.7 L17.4 81.9 L16.6 84.1 L15.6 86.3 L14.7 88.5 L14.2 90.7 L14.1 92.9 L14.4 95.1 L14.8 97.3 L15.0 99.5 L14.9 101.7 L14.3 103.9 L13.4 106.1 L12.4 108.3 L11.6 110.5" stroke="#f2b43e" stroke-width="2.6" fill="none" opacity=".5" stroke-linecap="round"/>
<path d="M84.4 44.6 L85.0 46.8 L84.7 49.0 L84.2 51.2 L83.9 53.4 L84.3 55.6 L85.4 57.8 L86.7 60.0 L87.5 62.2 L87.5 64.4 L87.0 66.6 L86.6 68.8 L86.7 71.0 L87.5 73.2 L88.8 75.4 L89.9 77.6 L90.2 79.8 L89.9 82.0 L89.3 84.2 L89.2 86.4 L89.8 88.6 L90.9 90.8 L92.2 93.0 L92.8 95.2 L92.7 97.4 L92.1 99.6 L91.8 101.8 L92.1 104.0 L93.1 106.2 L94.4 108.4" stroke="#f2b43e" stroke-width="1.4" fill="none" opacity=".5" stroke-linecap="round"/>
<path d="M56.3 64.4 L55.8 66.6 L55.1 68.8 L55.0 71.0 L55.8 73.2 L56.9 75.4 L57.6 77.6 L57.4 79.8 L56.7 82.0 L56.3 84.2 L56.6 86.4 L57.7 88.6 L58.7 90.8 L58.9 93.0 L58.4 95.2 L57.7 97.4 L57.7 99.6 L58.4 101.8 L59.5 104.0 L60.2 106.2 L60.1 108.4 L59.4 110.6 L58.9 112.8 L59.3 115.0" stroke="#d8701c" stroke-width="2.3" fill="none" opacity=".5" stroke-linecap="round"/>
<path d="M74.7 59.7 L75.3 61.9 L76.0 64.1 L76.8 66.3 L77.4 68.5 L77.7 70.7 L77.6 72.9 L77.5 75.1 L77.4 77.3 L77.5 79.5 L77.9 81.7 L78.6 83.9 L79.4 86.1 L80.1 88.3 L80.6 90.5 L80.7 92.7 L80.6 94.9 L80.5 97.1 L80.4 99.3 L80.7 101.5 L81.2 103.7 L82.0 105.9 L82.8 108.1 L83.4 110.3 L83.7 112.5 L83.8 114.7 L83.6 116.9 L83.5 119.1" stroke="#d8701c" stroke-width="1.8" fill="none" opacity=".5" stroke-linecap="round"/>
<path d="M24.9 49.2 L24.2 51.4 L23.9 53.6 L23.9 55.8 L24.1 58.0 L24.3 60.2 L24.3 62.4 L24.0 64.6 L23.3 66.8 L22.4 69.0 L21.6 71.2 L21.0 73.4 L20.7 75.6 L20.7 77.8 L20.9 80.0 L21.1 82.2 L21.1 84.4 L20.7 86.6 L20.0 88.8 L19.2 91.0 L18.3 93.2 L17.7 95.4" stroke="#fdea9e" stroke-width="1.2" fill="none" opacity=".5" stroke-linecap="round"/>
<path d="M14.0 47.8 L13.5 50.0 L12.8 52.2 L12.0 54.4 L11.4 56.6 L11.0 58.8 L10.9 61.0 L11.0 63.2 L11.2 65.4 L11.2 67.6 L10.8 69.8 L10.2 72.0 L9.5 74.2 L8.7 76.4 L8.2 78.6 L8.0 80.8 L8.0 83.0 L8.2 85.2 L8.3 87.4 L8.1 89.6 L7.6 91.8 L6.9 94.0 L6.1 96.2 L5.5 98.4 L5.1 100.6" stroke="#f2b43e" stroke-width="2.2" fill="none" opacity=".5" stroke-linecap="round"/>
<path d="M12.0 52.5 L12.2 54.7 L13.1 56.9 L14.0 59.1 L14.1 61.3 L13.3 63.5 L11.7 65.7 L10.2 67.9 L9.5 70.1 L9.8 72.3 L10.8 74.5 L11.6 76.7 L11.6 78.9 L10.6 81.1 L9.1 83.3 L7.7 85.5 L7.1 87.7 L7.5 89.9 L8.5 92.1 L9.2 94.3" stroke="#f2b43e" stroke-width="2.0" fill="none" opacity=".5" stroke-linecap="round"/>
<path d="M70.4 41.8 L71.3 44.0 L73.0 46.2 L74.5 48.4 L75.0 50.6 L74.4 52.8 L73.4 55.0 L72.8 57.2 L73.3 59.4 L74.8 61.6 L76.5 63.8 L77.4 66.0 L77.2 68.2 L76.2 70.4 L75.4 72.6 L75.5 74.8 L76.6 77.0 L78.3 79.2 L79.6 81.4 L79.9 83.6 L79.1 85.8 L78.1 88.0 L77.8 90.2 L78.6 92.4 L80.2 94.6 L81.7 96.8 L82.4 99.0" stroke="#e8952c" stroke-width="2.8" fill="none" opacity=".5" stroke-linecap="round"/>
<path d="M76.9 43.9 L77.7 46.1 L78.8 48.3 L79.5 50.5 L79.4 52.7 L78.6 54.9 L78.0 57.1 L78.3 59.3 L79.3 61.5 L80.3 63.7 L80.7 65.9 L80.2 68.1 L79.4 70.3 L79.1 72.5 L79.7 74.7 L80.8 76.9 L81.7 79.1 L81.7 81.3 L81.0 83.5 L80.3 85.7 L80.4 87.9 L81.3 90.1 L82.4 92.3 L82.9 94.5 L82.5 96.7 L81.7 98.9 L81.3 101.1 L81.8 103.3" stroke="#e8952c" stroke-width="2.2" fill="none" opacity=".5" stroke-linecap="round"/>
<path d="M81.9 62.8 L82.0 65.0 L81.6 67.2 L81.2 69.4 L81.3 71.6 L82.0 73.8 L83.1 76.0 L83.9 78.2 L84.0 80.4 L83.6 82.6 L83.2 84.8 L83.3 87.0 L84.1 89.2 L85.2 91.4 L85.9 93.6 L86.0 95.8 L85.5 98.0 L85.1 100.2 L85.4 102.4 L86.2 104.6 L87.3 106.8" stroke="#d8701c" stroke-width="1.8" fill="none" opacity=".5" stroke-linecap="round"/>
<path d="M10.5 44.6 L11.0 46.8 L11.4 49.0 L11.3 51.2 L10.8 53.4 L10.0 55.6 L9.2 57.8 L8.7 60.0 L8.7 62.2 L9.1 64.4 L9.6 66.6 L9.8 68.8 L9.7 71.0 L9.0 73.2 L8.2 75.4 L7.5 77.6 L7.1 79.8 L7.2 82.0 L7.7 84.2 L8.1 86.4 L8.3 88.6 L8.0 90.8 L7.3 93.0 L6.4 95.2 L5.8 97.4 L5.5 99.6 L5.8 101.8 L6.2 104.0 L6.7 106.2 L6.7 108.4 L6.3 110.6 L5.5 112.8" stroke="#f2b43e" stroke-width="2.7" fill="none" opacity=".5" stroke-linecap="round"/>
<path d="M16.3 42.6 L17.0 44.8 L17.8 47.0 L18.0 49.2 L17.5 51.4 L16.7 53.6 L16.3 55.8 L16.6 58.0 L17.4 60.2 L18.0 62.4 L18.1 64.6 L17.5 66.8 L16.7 69.0 L16.5 71.2 L16.9 73.4 L17.7 75.6 L18.3 77.8 L18.1 80.0 L17.4 82.2 L16.7 84.4 L16.7 86.6 L17.3 88.8 L18.1 91.0 L18.5 93.2 L18.1 95.4" stroke="#e8952c" stroke-width="2.7" fill="none" opacity=".5" stroke-linecap="round"/>
<path d="M31.0 62.9 L30.3 65.1 L29.7 67.3 L29.6 69.5 L29.9 71.7 L30.7 73.9 L31.4 76.1 L31.8 78.3 L31.6 80.5 L31.0 82.7 L30.3 84.9 L29.8 87.1 L29.7 89.3 L30.2 91.5 L31.0 93.7 L31.6 95.9 L31.9 98.1 L31.7 100.3" stroke="#d8701c" stroke-width="1.3" fill="none" opacity=".5" stroke-linecap="round"/>
<path d="M79.1 51.6 L80.5 53.8 L80.7 56.0 L79.9 58.2 L79.1 60.4 L79.4 62.6 L80.9 64.8 L82.6 67.0 L83.1 69.2 L82.5 71.4 L81.5 73.6 L81.5 75.8 L82.8 78.0 L84.5 80.2 L85.5 82.4 L85.0 84.6 L84.0 86.8" stroke="#f6c455" stroke-width="2.6" fill="none" opacity=".5" stroke-linecap="round"/>
<path d="M59.9 83.5 L60.9 85.7 L61.1 87.9 L60.4 90.1 L59.3 92.3 L58.5 94.5 L58.6 96.7 L59.5 98.9 L60.6 101.1 L61.1 103.3 L60.7 105.5 L59.6 107.7 L58.6 109.9 L58.4 112.1 L59.1 114.3 L60.2 116.5 L61.0 118.7" stroke="#e8952c" stroke-width="2.0" fill="none" opacity=".5" stroke-linecap="round"/>
<path d="M70.8 67.1 L70.4 69.3 L69.1 71.5 L68.1 73.7 L68.2 75.9 L69.4 78.1 L70.8 80.3 L71.3 82.5 L70.5 84.7 L69.2 86.9 L68.5 89.1 L68.9 91.3 L70.2 93.5 L71.4 95.7 L71.6 97.9 L70.7 100.1 L69.4 102.3 L68.9 104.5 L69.5 106.7" stroke="#c45a12" stroke-width="1.6" fill="none" opacity=".5" stroke-linecap="round"/>
<path d="M14.7 68.6 L13.9 70.8 L13.3 73.0 L13.3 75.2 L13.9 77.4 L14.7 79.6 L15.3 81.8 L15.3 84.0 L14.7 86.2 L13.9 88.4 L13.4 90.6 L13.5 92.8 L14.2 95.0 L15.1 97.2 L15.6 99.4 L15.4 101.6 L14.7 103.8 L14.0 106.0 L13.6 108.2 L13.8 110.4 L14.6 112.6 L15.4 114.8 L15.8 117.0 L15.5 119.2" stroke="#f9d266" stroke-width="2.1" fill="none" opacity=".5" stroke-linecap="round"/>
<path d="M54.9 64.4 L55.2 66.6 L55.7 68.8 L56.3 71.0 L56.8 73.2 L57.0 75.4 L57.0 77.6 L56.7 79.8 L56.4 82.0 L56.2 84.2 L56.4 86.4 L56.9 88.6 L57.5 90.8 L58.0 93.0 L58.3 95.2 L58.3 97.4 L58.0 99.6" stroke="#e8952c" stroke-width="1.7" fill="none" opacity=".5" stroke-linecap="round"/>
<path d="M72.5 63.8 L72.9 66.0 L73.5 68.2 L74.1 70.4 L74.4 72.6 L74.2 74.8 L73.6 77.0 L73.2 79.2 L73.0 81.4 L73.2 83.6 L73.8 85.8 L74.5 88.0 L74.8 90.2 L74.7 92.4 L74.2 94.6 L73.7 96.8 L73.4 99.0 L73.6 101.2 L74.2 103.4" stroke="#f6c455" stroke-width="1.9" fill="none" opacity=".5" stroke-linecap="round"/>
<path d="M38.5 67.8 L37.2 70.0 L36.4 72.2 L36.6 74.4 L37.4 76.6 L38.4 78.8 L38.7 81.0 L38.2 83.2 L37.0 85.4 L35.5 87.6 L34.5 89.8 L34.3 92.0 L34.9 94.2 L35.9 96.4 L36.6 98.6 L36.4 100.8 L35.4 103.0 L34.0 105.2" stroke="#c45a12" stroke-width="2.0" fill="none" opacity=".5" stroke-linecap="round"/>
<path d="M27.3 67.3 L25.9 69.5 L24.8 71.7 L24.3 73.9 L24.3 76.1 L24.9 78.3 L25.7 80.5 L26.2 82.7 L26.1 84.9 L25.3 87.1 L24.1 89.3 L22.8 91.5 L21.8 93.7 L21.5 95.9 L21.7 98.1 L22.4 100.3 L23.1 102.5 L23.5 104.7 L23.1 106.9 L22.2 109.1 L20.9 111.3 L19.7 113.5 L18.9 115.7 L18.7 117.9" stroke="#e8952c" stroke-width="1.4" fill="none" opacity=".5" stroke-linecap="round"/>
<path d="M13.0 43.1 L13.1 45.3 L12.9 47.5 L12.4 49.7 L11.9 51.9 L11.7 54.1 L11.8 56.3 L12.3 58.5 L12.9 60.7 L13.2 62.9 L13.2 65.1 L12.9 67.3 L12.4 69.5 L11.9 71.7 L11.8 73.9 L12.1 76.1 L12.7 78.3 L13.2 80.5 L13.5 82.7 L13.3 84.9 L12.9 87.1 L12.4 89.3 L12.0 91.5 L12.1 93.7 L12.5 95.9 L13.0 98.1 L13.5 100.3 L13.6 102.5" stroke="#f2b43e" stroke-width="1.4" fill="none" opacity=".5" stroke-linecap="round"/>
<path d="M85.5 42.3 L86.9 44.5 L88.6 46.7 L89.7 48.9 L89.7 51.1 L88.8 53.3 L88.0 55.5 L87.9 57.7 L88.9 59.9 L90.5 62.1 L92.0 64.3 L92.6 66.5 L92.1 68.7 L91.2 70.9 L90.6 73.1 L91.0 75.3 L92.4 77.5 L94.1 79.7 L95.2 81.9 L95.3 84.1 L94.5 86.3 L93.6 88.5 L93.4 90.7" stroke="#f2b43e" stroke-width="2.3" fill="none" opacity=".5" stroke-linecap="round"/>
<path d="M68.6 50.0 L67.7 52.2 L67.4 54.4 L68.2 56.6 L69.2 58.8 L69.8 61.0 L69.4 63.2 L68.4 65.4 L67.9 67.6 L68.4 69.8 L69.5 72.0 L70.3 74.2 L70.1 76.4 L69.2 78.6 L68.5 80.8 L68.7 83.0 L69.7 85.2 L70.6 87.4 L70.8 89.6 L70.0 91.8 L69.2 94.0" stroke="#e8952c" stroke-width="1.8" fill="none" opacity=".5" stroke-linecap="round"/>
<path d="M65.2 70.5 L65.8 72.7 L66.2 74.9 L66.2 77.1 L66.0 79.3 L65.9 81.5 L65.9 83.7 L66.2 85.9 L66.9 88.1 L67.7 90.3 L68.5 92.5 L69.1 94.7 L69.3 96.9 L69.3 99.1 L69.1 101.3 L68.9 103.5 L69.1 105.7 L69.5 107.9" stroke="#c45a12" stroke-width="1.3" fill="none" opacity=".5" stroke-linecap="round"/>
<path d="M64.8 38.9 L65.1 41.1 L64.9 43.3 L64.3 45.5 L63.7 47.7 L63.2 49.9 L63.1 52.1 L63.5 54.3 L64.2 56.5 L64.9 58.7 L65.4 60.9 L65.5 63.1 L65.2 65.3 L64.6 67.5 L63.9 69.7 L63.6 71.9 L63.6 74.1 L64.1 76.3 L64.9 78.5 L65.6 80.7 L66.0 82.9 L65.9 85.1 L65.4 87.3 L64.8 89.5 L64.2 91.7 L64.0 93.9 L64.2 96.1 L64.9 98.3 L65.6 100.5" stroke="#e07e22" stroke-width="2.3" fill="none" opacity=".5" stroke-linecap="round"/>
<path d="M10.8 60.2 L11.5 62.4 L12.4 64.6 L12.7 66.8 L11.8 69.0 L10.7 71.2 L10.2 73.4 L10.7 75.6 L11.7 77.8 L12.1 80.0 L11.5 82.2 L10.3 84.4 L9.6 86.6 L9.9 88.8 L10.9 91.0 L11.5 93.2 L11.1 95.4 L10.0 97.6 L9.1 99.8 L9.2 102.0 L10.1 104.2 L10.9 106.4 L10.7 108.6 L9.6 110.8 L8.6 113.0 L8.5 115.2 L9.3 117.4 L10.2 119.6" stroke="#fdea9e" stroke-width="2.2" fill="none" opacity=".5" stroke-linecap="round"/>
<path d="M18.0 38.6 L17.8 40.8 L17.9 43.0 L18.2 45.2 L18.7 47.4 L19.1 49.6 L19.3 51.8 L19.3 54.0 L19.0 56.2 L18.6 58.4 L18.3 60.6 L18.1 62.8 L18.2 65.0 L18.5 67.2 L19.0 69.4 L19.4 71.6 L19.6 73.8 L19.6 76.0 L19.3 78.2 L18.9 80.4 L18.5 82.6 L18.4 84.8" stroke="#fdea9e" stroke-width="2.0" fill="none" opacity=".5" stroke-linecap="round"/>
<path d="M12.8 40.1 L12.9 42.3 L13.3 44.5 L13.5 46.7 L13.1 48.9 L12.3 51.1 L11.5 53.3 L11.1 55.5 L11.3 57.7 L11.8 59.9 L11.9 62.1 L11.3 64.3 L10.4 66.5 L9.7 68.7 L9.5 70.9 L9.8 73.1 L10.2 75.3 L10.2 77.5 L9.5 79.7 L8.6 81.9" stroke="#f2b43e" stroke-width="1.9" fill="none" opacity=".5" stroke-linecap="round"/>
<path d="M63.7 64.5 L65.4 66.7 L65.8 68.9 L64.7 71.1 L63.3 73.3 L63.1 75.5 L64.5 77.7 L66.3 79.9 L66.8 82.1 L65.7 84.3 L64.3 86.5 L64.0 88.7 L65.3 90.9 L67.1 93.1" stroke="#e07e22" stroke-width="1.6" fill="none" opacity=".5" stroke-linecap="round"/>
<path d="M32.3 75.8 L32.0 78.0 L31.2 80.2 L30.1 82.4 L29.2 84.6 L28.6 86.8 L28.6 89.0 L29.0 91.2 L29.6 93.4 L30.0 95.6 L29.9 97.8 L29.4 100.0 L28.4 102.2 L27.4 104.4 L26.6 106.6 L26.3 108.8 L26.5 111.0 L27.0 113.2 L27.5 115.4 L27.7 117.6 L27.5 119.8" stroke="#e8952c" stroke-width="1.7" fill="none" opacity=".5" stroke-linecap="round"/>
<path d="M78.8 58.2 L79.4 60.4 L79.2 62.6 L78.4 64.8 L77.6 67.0 L77.2 69.2 L77.6 71.4 L78.4 73.6 L79.2 75.8 L79.3 78.0 L78.7 80.2 L77.8 82.4 L77.2 84.6 L77.3 86.8 L78.1 89.0" stroke="#e8952c" stroke-width="1.9" fill="none" opacity=".5" stroke-linecap="round"/>
<path d="M32.8 72.1 L32.5 74.3 L31.3 76.5 L29.8 78.7 L28.4 80.9 L27.9 83.1 L28.2 85.3 L29.0 87.5 L29.8 89.7 L29.8 91.9 L28.9 94.1 L27.4 96.3 L25.9 98.5 L25.0 100.7 L25.0 102.9 L25.8 105.1 L26.6 107.3 L26.9 109.5 L26.3 111.7 L25.0 113.9 L23.4 116.1 L22.3 118.3" stroke="#d8701c" stroke-width="1.9" fill="none" opacity=".5" stroke-linecap="round"/>
<path d="M40.8 73.1 L41.1 75.3 L41.2 77.5 L41.0 79.7 L40.4 81.9 L39.6 84.1 L38.9 86.3 L38.3 88.5 L38.2 90.7 L38.3 92.9 L38.7 95.1 L39.0 97.3 L39.1 99.5 L38.8 101.7 L38.2 103.9 L37.4 106.1 L36.6 108.3 L36.2 110.5 L36.0 112.7 L36.2 114.9" stroke="#c45a12" stroke-width="1.3" fill="none" opacity=".5" stroke-linecap="round"/>
<path d="M31.5 78.6 L30.9 80.8 L30.3 83.0 L29.9 85.2 L29.8 87.4 L30.1 89.6 L30.5 91.8 L30.8 94.0 L30.9 96.2 L30.5 98.4 L30.0 100.6 L29.3 102.8 L28.9 105.0 L28.7 107.2 L28.9 109.4 L29.3 111.6 L29.7 113.8" stroke="#d8701c" stroke-width="1.7" fill="none" opacity=".5" stroke-linecap="round"/>
<path d="M29.7 54.1 L28.7 56.3 L27.8 58.5 L27.3 60.7 L27.6 62.9 L28.5 65.1 L29.6 67.3 L30.2 69.5 L30.2 71.7 L29.4 73.9 L28.4 76.1 L27.6 78.3 L27.5 80.5 L28.1 82.7 L29.1 84.9 L30.0 87.1 L30.4 89.3 L30.0 91.5 L29.1 93.7 L28.1 95.9 L27.6 98.1 L27.7 100.3 L28.5 102.5 L29.6 104.7 L30.4 106.9 L30.5 109.1 L29.8 111.3" stroke="#f2b43e" stroke-width="2.4" fill="none" opacity=".5" stroke-linecap="round"/>
<path d="M19.5 57.5 L18.8 59.7 L18.1 61.9 L17.8 64.1 L17.8 66.3 L18.2 68.5 L18.6 70.7 L18.8 72.9 L18.7 75.1 L18.3 77.3 L17.6 79.5 L16.9 81.7 L16.5 83.9 L16.4 86.1 L16.7 88.3 L17.1 90.5 L17.4 92.7 L17.4 94.9 L17.1 97.1 L16.4 99.3 L15.7 101.5 L15.2 103.7 L15.0 105.9 L15.2 108.1 L15.6 110.3 L16.0 112.5 L16.1 114.7" stroke="#f9d266" stroke-width="2.7" fill="none" opacity=".5" stroke-linecap="round"/>
<path d="M73.6 64.9 L74.3 67.1 L74.9 69.3 L75.2 71.5 L75.1 73.7 L74.9 75.9 L74.7 78.1 L74.8 80.3 L75.2 82.5 L75.9 84.7 L76.7 86.9 L77.2 89.1 L77.3 91.3 L77.2 93.5 L76.9 95.7 L76.8 97.9 L77.0 100.1 L77.6 102.3 L78.3 104.5 L79.0 106.7 L79.4 108.9 L79.5 111.1 L79.3 113.3 L79.0 115.5 L79.0 117.7 L79.3 119.9" stroke="#f2b43e" stroke-width="1.3" fill="none" opacity=".5" stroke-linecap="round"/>
<path d="M31.5 69.0 L30.9 71.2 L29.6 73.4 L28.8 75.6 L29.1 77.8 L30.1 80.0 L30.7 82.2 L30.2 84.4 L28.9 86.6 L28.0 88.8 L28.2 91.0 L29.1 93.2 L29.8 95.4 L29.4 97.6" stroke="#d8701c" stroke-width="1.2" fill="none" opacity=".5" stroke-linecap="round"/>
<path d="M80.9 53.1 L80.9 55.3 L80.3 57.5 L79.7 59.7 L79.5 61.9 L79.9 64.1 L80.9 66.3 L82.0 68.5 L82.9 70.7 L83.2 72.9 L82.9 75.1 L82.3 77.3 L81.8 79.5 L81.8 81.7 L82.5 83.9" stroke="#f9d266" stroke-width="2.6" fill="none" opacity=".5" stroke-linecap="round"/>
<path d="M35.3 75.6 L35.0 77.8 L34.3 80.0 L33.6 82.2 L33.2 84.4 L33.3 86.6 L33.9 88.8 L34.6 91.0 L35.3 93.2 L35.6 95.4 L35.4 97.6 L34.8 99.8 L34.0 102.0 L33.5 104.2 L33.4 106.4 L33.9 108.6" stroke="#f2b43e" stroke-width="2.2" fill="none" opacity=".5" stroke-linecap="round"/>
<path d="M58.1 66.1 L58.9 68.3 L58.7 70.5 L57.6 72.7 L56.3 74.9 L55.8 77.1 L56.3 79.3 L57.5 81.5 L58.4 83.7 L58.3 85.9 L57.3 88.1 L56.1 90.3 L55.4 92.5 L55.8 94.7 L56.9 96.9 L57.8 99.1 L58.0 101.3 L57.1 103.5 L55.8 105.7 L55.0 107.9 L55.2 110.1 L56.2 112.3 L57.3 114.5 L57.6 116.7" stroke="#c45a12" stroke-width="2.8" fill="none" opacity=".5" stroke-linecap="round"/>
<path d="M16.9 52.6 L18.0 54.8 L18.3 57.0 L17.6 59.2 L16.3 61.4 L15.4 63.6 L15.6 65.8 L16.5 68.0 L17.7 70.2 L18.0 72.4 L17.4 74.6 L16.2 76.8 L15.2 79.0 L15.3 81.2 L16.2 83.4 L17.3 85.6 L17.8 87.8 L17.2 90.0 L16.0 92.2 L15.0 94.4 L15.0 96.6 L15.8 98.8 L17.0 101.0" stroke="#f9d266" stroke-width="1.7" fill="none" opacity=".5" stroke-linecap="round"/>
<path d="M25.6 45.0 L25.1 47.2 L24.7 49.4 L24.6 51.6 L24.9 53.8 L25.5 56.0 L26.1 58.2 L26.4 60.4 L26.1 62.6 L25.6 64.8 L25.2 67.0 L25.1 69.2 L25.4 71.4 L26.0 73.6 L26.6 75.8 L26.9 78.0 L26.6 80.2 L26.1 82.4 L25.7 84.6 L25.6 86.8 L25.9 89.0 L26.5 91.2 L27.1 93.4 L27.4 95.6 L27.1 97.8 L26.6 100.0 L26.2 102.2 L26.1 104.4 L26.4 106.6 L27.1 108.8 L27.6 111.0 L27.9 113.2" stroke="#f9d266" stroke-width="1.3" fill="none" opacity=".5" stroke-linecap="round"/>
<path d="M34.9 68.6 L33.7 70.8 L32.5 73.0 L31.7 75.2 L31.5 77.4 L31.9 79.6 L32.5 81.8 L32.9 84.0 L32.5 86.2 L31.6 88.4 L30.3 90.6 L29.3 92.8 L28.7 95.0 L28.9 97.2 L29.5 99.4 L30.0 101.6 L30.0 103.8 L29.4 106.0 L28.2 108.2" stroke="#c45a12" stroke-width="2.6" fill="none" opacity=".5" stroke-linecap="round"/>
<path d="M11.8 34.1 L10.7 36.3 L9.5 38.5 L8.7 40.7 L8.6 42.9 L9.1 45.1 L9.7 47.3 L9.8 49.5 L9.1 51.7 L8.0 53.9 L6.8 56.1 L6.2 58.3 L6.3 60.5 L6.9 62.7 L7.4 64.9 L7.3 67.1 L6.5 69.3 L5.2 71.5 L4.2 73.7 L3.7 75.9" stroke="#f2b43e" stroke-width="1.4" fill="none" opacity=".5" stroke-linecap="round"/>
<path d="M19.3 46.9 L19.1 49.1 L19.3 51.3 L19.6 53.5 L19.8 55.7 L19.6 57.9 L19.0 60.1 L18.1 62.3 L17.0 64.5 L16.1 66.7 L15.6 68.9 L15.5 71.1 L15.7 73.3 L16.1 75.5 L16.2 77.7 L15.9 79.9 L15.2 82.1 L14.2 84.3" stroke="#f2b43e" stroke-width="1.8" fill="none" opacity=".5" stroke-linecap="round"/>
<path d="M41.0 68.7 L41.5 70.9 L42.1 73.1 L42.1 75.3 L41.3 77.5 L40.0 79.7 L38.9 81.9 L38.7 84.1 L39.1 86.3 L39.7 88.5 L39.8 90.7 L39.0 92.9 L37.7 95.1 L36.7 97.3 L36.3 99.5" stroke="#d8701c" stroke-width="2.2" fill="none" opacity=".5" stroke-linecap="round"/>
<path d="M39.6 67.6 L39.6 69.8 L40.2 72.0 L40.8 74.2 L41.0 76.4 L40.6 78.6 L39.6 80.8 L38.3 83.0 L37.1 85.2 L36.3 87.4 L36.3 89.6 L36.8 91.8 L37.4 94.0 L37.7 96.2 L37.4 98.4 L36.5 100.6 L35.2 102.8 L33.9 105.0 L33.1 107.2 L33.0 109.4 L33.4 111.6 L34.1 113.8" stroke="#c45a12" stroke-width="2.7" fill="none" opacity=".5" stroke-linecap="round"/>
<path d="M72.5 61.3 L72.6 63.5 L73.1 65.7 L73.8 67.9 L74.6 70.1 L75.2 72.3 L75.4 74.5 L75.3 76.7 L75.1 78.9 L74.9 81.1 L75.0 83.3 L75.5 85.5 L76.3 87.7 L77.0 89.9 L77.6 92.1 L77.8 94.3 L77.6 96.5 L77.4 98.7 L77.3 100.9 L77.4 103.1 L77.9 105.3 L78.7 107.5" stroke="#e8952c" stroke-width="2.0" fill="none" opacity=".5" stroke-linecap="round"/>
<path d="M72.2 40.5 L72.3 42.7 L73.2 44.9 L74.4 47.1 L75.3 49.3 L75.3 51.5 L74.7 53.7 L74.1 55.9 L74.1 58.1 L75.0 60.3 L76.2 62.5 L77.1 64.7 L77.2 66.9 L76.6 69.1 L75.9 71.3 L75.9 73.5 L76.7 75.7 L78.0 77.9 L78.9 80.1" stroke="#d8701c" stroke-width="2.2" fill="none" opacity=".5" stroke-linecap="round"/>
<path d="M27.9 49.0 L27.2 51.2 L27.1 53.4 L27.7 55.6 L28.5 57.8 L28.8 60.0 L28.4 62.2 L27.7 64.4 L27.2 66.6 L27.4 68.8 L28.2 71.0 L28.9 73.2 L28.9 75.4 L28.3 77.6 L27.6 79.8 L27.4 82.0 L27.9 84.2 L28.7 86.4" stroke="#f9d266" stroke-width="1.9" fill="none" opacity=".5" stroke-linecap="round"/>
<path d="M35.0 73.1 L33.9 75.3 L33.0 77.5 L32.7 79.7 L33.2 81.9 L33.8 84.1 L33.8 86.3 L33.1 88.5 L32.0 90.7 L31.3 92.9 L31.3 95.1 L31.9 97.3 L32.3 99.5 L32.1 101.7 L31.1 103.9 L30.1 106.1 L29.6 108.3 L29.9 110.5 L30.6 112.7 L30.8 114.9 L30.2 117.1 L29.2 119.3" stroke="#e8952c" stroke-width="2.6" fill="none" opacity=".5" stroke-linecap="round"/>
<path d="M69.8 49.7 L69.2 51.9 L68.2 54.1 L67.4 56.3 L67.3 58.5 L68.0 60.7 L69.0 62.9 L69.5 65.1 L69.3 67.3 L68.4 69.5 L67.4 71.7 L67.0 73.9 L67.4 76.1 L68.3 78.3 L69.1 80.5 L69.2 82.7 L68.6 84.9 L67.5 87.1 L66.8 89.3 L66.8 91.5" stroke="#c45a12" stroke-width="1.4" fill="none" opacity=".5" stroke-linecap="round"/>
<path d="M76.1 66.8 L75.4 69.0 L75.1 71.2 L75.5 73.4 L76.3 75.6 L77.1 77.8 L77.3 80.0 L76.9 82.2 L76.2 84.4 L75.9 86.6 L76.2 88.8 L77.1 91.0 L77.9 93.2 L78.1 95.4 L77.7 97.6 L77.0 99.8 L76.6 102.0 L77.0 104.2 L77.8 106.4" stroke="#e8952c" stroke-width="2.6" fill="none" opacity=".5" stroke-linecap="round"/>
<path d="M56.7 77.0 L55.5 79.2 L54.3 81.4 L53.9 83.6 L54.5 85.8 L55.7 88.0 L56.6 90.2 L56.8 92.4 L56.0 94.6 L54.7 96.8 L53.7 99.0 L53.5 101.2 L54.2 103.4 L55.3 105.6 L56.2 107.8 L56.2 110.0 L55.3 112.2 L54.0 114.4 L53.1 116.6 L53.0 118.8" stroke="#e07e22" stroke-width="2.8" fill="none" opacity=".5" stroke-linecap="round"/>
</g>
</g></g></svg><!--/P1-->
<svg style="left:0;top:0" width="800" height="497" viewBox="0 0 800 497"><rect x="281.5" y="175.8" width="89.8" height="118.5" fill="none" stroke="#aeaedb" stroke-width="1.5"/></svg>
<!-- handles -->
<div class="abs hd" style="left:279.1px;top:173.4px"></div>
<div class="abs hd" style="left:369px;top:173.4px"></div>
<div class="abs hd" style="left:279.1px;top:292px"></div>
<div class="abs hd" style="left:369px;top:292px"></div>
<div class="abs hp" style="left:320.3px;top:174.2px;width:12.5px;height:3.3px"></div>
<div class="abs hp" style="left:320.3px;top:293.2px;width:12.5px;height:3.4px"></div>
<div class="abs hp" style="left:279.9px;top:229.2px;width:3.2px;height:11.4px"></div>
<div class="abs hp" style="left:369.8px;top:229.2px;width:3.2px;height:11.4px"></div>
<!-- flip -->
<div class="abs" style="left:319.5px;top:304.7px;width:13.6px;height:13.6px;border-radius:50%;background:#fff"></div>
<svg style="left:322px;top:308.2px" width="9" height="6.4" viewBox="0 0 9 6.4">
  <path d="M4.45 0V6.4" stroke="#3a3a3a" stroke-width=".8"/>
  <path d="M.3 1.2L3.5 3.2L.3 5.2ZM8.6 1.2L5.4 3.2L8.6 5.2Z" fill="#3a3a3a"/>
</svg>
<!-- toast -->
<div class="abs" style="left:-4px;top:404.5px;width:71px;height:19px;background:#fff;border-radius:4.5px;box-shadow:0 0 3px rgba(0,0,0,.10)"></div>
<div class="t" style="left:7px;top:411px;font-size:6.7px;color:#333">右键移动画布</div>
<svg style="left:53.8px;top:410.4px" width="8" height="8" viewBox="0 0 8 8">
  <circle cx="4" cy="4" r="3.8" fill="#b9b9b9"/>
  <path d="M2.5 2.5L5.5 5.5M5.5 2.5L2.5 5.5" stroke="#fff" stroke-width=".9"/>
</svg>

<!-- ============ BOTTOM BAR ============ -->
<svg style="left:243px;top:437.2px" width="8" height="8" viewBox="0 0 8 8">
  <path d="M1.5 4.9C.9 4.2 .4 3.6 .8 3.1C1.2 2.7 1.8 3.1 2.1 3.5V2.1C2.1 1.3 3.1 1.2 3.3 1.9C3.4 1 4.5 1 4.6 1.8C4.9 1.1 5.8 1.3 5.8 2.1C6.2 1.6 7 1.9 7 2.7V4.9C7 6.6 5.9 7.6 4.3 7.6C3 7.6 2.2 6.9 1.5 4.9Z" stroke="#3c3c3c" stroke-width=".95" fill="none" stroke-linejoin="round"/>
</svg>
<svg style="left:263px;top:437.4px" width="9" height="9" viewBox="0 0 9 9">
  <circle cx="3.7" cy="3.7" r="3.1" stroke="#3c3c3c" stroke-width="1.05" fill="none"/>
  <path d="M6 6L8.4 8.4M2.2 3.7H5.2" stroke="#3c3c3c" stroke-width="1.05" fill="none"/>
</svg>
<div class="t" style="left:281.6px;top:438px;font-size:7.2px;color:#333">25%</div>
<svg style="left:303px;top:437.4px" width="9" height="9" viewBox="0 0 9 9">
  <circle cx="3.7" cy="3.7" r="3.1" stroke="#3c3c3c" stroke-width="1.05" fill="none"/>
  <path d="M6 6L8.4 8.4M2.2 3.7H5.2M3.7 2.2V5.2" stroke="#3c3c3c" stroke-width="1.05" fill="none"/>
</svg>
<svg style="left:324.6px;top:438.4px" width="9" height="7" viewBox="0 0 9 7">
  <rect x=".5" y=".5" width="7.4" height="5.6" rx="1.2" stroke="#3c3c3c" stroke-width="1.05" fill="none"/>
  <path d="M4.2 .5V6.1" stroke="#3c3c3c" stroke-width="1.05"/>
</svg>
<div class="t" style="left:550px;top:438.2px;font-size:6.8px;color:#888;letter-spacing:.3px">1 / 1</div>
<!-- prev/next -->
<div class="abs" style="left:12px;top:460.5px;width:16px;height:16px;border-radius:50%;background:#f1f1f1;border:1px solid #ececec"></div>
<svg style="left:18px;top:465.6px" width="4" height="6" viewBox="0 0 4 6"><path d="M3.2 .6L.8 3L3.2 5.4" stroke="#b0b0b0" stroke-width=".8" fill="none"/></svg>
<div class="abs" style="left:548px;top:461px;width:16px;height:16px;border-radius:50%;background:#f1f1f1;border:1px solid #ececec"></div>
<svg style="left:554.4px;top:466px" width="4" height="6" viewBox="0 0 4 6"><path d="M.8 .6L3.2 3L.8 5.4" stroke="#b0b0b0" stroke-width=".8" fill="none"/></svg>
<!-- thumbnail -->
<svg style="left:0;top:0" width="800" height="497" viewBox="0 0 800 497"><rect x="271.9" y="452.4" width="32.5" height="32.8" rx="2.2" fill="#fff" stroke="#6a6acc" stroke-width="1.5"/></svg>
<!--P2--><svg style="left:275.7px;top:453.4px" width="24.6" height="30.8" viewBox="0 0 90 118.6" preserveAspectRatio="none">
<defs>
<filter id="blb" x="-5%" y="-5%" width="110%" height="110%"><feGaussianBlur stdDeviation="1.1"/></filter>
<filter id="sfb" x="-30%" y="-30%" width="160%" height="160%"><feGaussianBlur stdDeviation="2.2"/></filter>
<clipPath id="cpb"><rect x="0" y="0" width="90" height="118.6"/></clipPath>
<clipPath id="hcb"><path d="M44.2 3.3C39.5 3.6 35 6 32.4 10C30 14.6 28.6 19.6 27.4 24.5C26 28.4 23.6 31.6 21.8 35.7C20 40 17.6 43.6 16.4 48.3C15 53 13.6 55.6 12.8 59.4C11.8 64 11 67.6 10.4 71.5C9.6 76 9.4 79 9.6 84C9.8 89 11 92 12.4 96C13.6 101 14.6 105 15.6 109C16.6 113 17.6 116 18.5 118.6H84C84.6 112 85.4 106 85.4 100C85.6 92 86.6 82 85.4 75C84.4 70 82.4 65 80.4 61.3C78.4 57 75.8 53 74 49.3C71.8 45 70 41 68.6 36.7C67.2 32 66.2 28 65.2 24.3C64.2 20 63.4 17 62 14C60.4 10 57.6 6.4 54 4.6C51 3.2 48 3 44.2 3.3Z"/></clipPath>
<linearGradient id="hgb" x1="0" y1="0" x2="1" y2="0">
<stop offset="0" stop-color="#f9de8c"/><stop offset=".24" stop-color="#f6cc62"/><stop offset=".36" stop-color="#f0b044"/><stop offset=".5" stop-color="#e4942e"/><stop offset=".62" stop-color="#d0741e"/><stop offset=".76" stop-color="#c8681a"/><stop offset=".86" stop-color="#ea9e34"/><stop offset="1" stop-color="#f4bc54"/>
</linearGradient>
<linearGradient id="tgb" x1="0" y1="0" x2="0" y2="1">
<stop offset="0" stop-color="#a8652a" stop-opacity=".95"/><stop offset=".16" stop-color="#cf9344" stop-opacity=".85"/><stop offset=".4" stop-color="#e6ad50" stop-opacity=".35"/><stop offset=".7" stop-color="#e0a040" stop-opacity="0"/>
</linearGradient>
<linearGradient id="skb" x1="0" y1="0" x2="1" y2=".2">
<stop offset="0" stop-color="#f6cba6"/><stop offset=".5" stop-color="#efb892"/><stop offset="1" stop-color="#cf8d66"/>
</linearGradient>
<linearGradient id="nkb" x1="0" y1="0" x2="0" y2="1">
<stop offset="0" stop-color="#9c5226"/><stop offset=".3" stop-color="#d08040"/><stop offset="1" stop-color="#c87030"/>
</linearGradient>
</defs>
<rect x="0" y="0" width="90" height="118.6" fill="#fff"/>
<g clip-path="url(#cpb)"><g filter="url(#blb)">
<path d="M1.2 84.5L8 79.5L15 76L22 84L26 118.6H1.2Z" fill="#55523e"/>
<path d="M83 70L88.8 74V118.6H80Z" fill="#48452f"/>
<path d="M44.2 3.3C39.5 3.6 35 6 32.4 10C30 14.6 28.6 19.6 27.4 24.5C26 28.4 23.6 31.6 21.8 35.7C20 40 17.6 43.6 16.4 48.3C15 53 13.6 55.6 12.8 59.4C11.8 64 11 67.6 10.4 71.5C9.6 76 9.4 79 9.6 84C9.8 89 11 92 12.4 96C13.6 101 14.6 105 15.6 109C16.6 113 17.6 116 18.5 118.6H84C84.6 112 85.4 106 85.4 100C85.6 92 86.6 82 85.4 75C84.4 70 82.4 65 80.4 61.3C78.4 57 75.8 53 74 49.3C71.8 45 70 41 68.6 36.7C67.2 32 66.2 28 65.2 24.3C64.2 20 63.4 17 62 14C60.4 10 57.6 6.4 54 4.6C51 3.2 48 3 44.2 3.3Z" fill="url(#hgb)"/>
<path d="M44.2 3.3C39.5 3.6 35 6 32.4 10C30 14.6 28.6 19.6 27.4 24.5C26 28.4 23.6 31.6 21.8 35.7C20 40 17.6 43.6 16.4 48.3C15 53 13.6 55.6 12.8 59.4C11.8 64 11 67.6 10.4 71.5C9.6 76 9.4 79 9.6 84C9.8 89 11 92 12.4 96C13.6 101 14.6 105 15.6 109C16.6 113 17.6 116 18.5 118.6H84C84.6 112 85.4 106 85.4 100C85.6 92 86.6 82 85.4 75C84.4 70 82.4 65 80.4 61.3C78.4 57 75.8 53 74 49.3C71.8 45 70 41 68.6 36.7C67.2 32 66.2 28 65.2 24.3C64.2 20 63.4 17 62 14C60.4 10 57.6 6.4 54 4.6C51 3.2 48 3 44.2 3.3Z" fill="url(#tgb)"/>
<g clip-path="url(#hcb)"><g filter="url(#sfb)">
<path d="M16 46C13 60 10 76 10 90C11 100 14 110 19 118.6H31C27 106 26 92 28 78C29 66 27 56 25 42Z" fill="#fdeeb0" opacity=".85"/>
<path d="M24 14C21 24 19 34 20 44C23 40 26 30 31 18Z" fill="#f6d282" opacity=".8"/>
<path d="M72 56C78 62 84 70 87 80V118.6H74C76 104 75 90 72 80C70 70 70 62 72 56Z" fill="#f8c458" opacity=".8"/>
<path d="M36 66C34 78 35 90 38 100C40 108 40 114 40 118.6H48C47 108 46.4 99 46 91C45.4 82 45 74 44 66Z" fill="#b8500f" opacity=".75"/>
<path d="M55 62C55 72 56 80 58 88C60 96 62 104 62 118.6H74C75 104 73 92 70 82C67 74 65 66 64 58Z" fill="#aa4410" opacity=".8"/>
<path d="M62 90C66 98 70 106 71 118.6H63C63 108 61 98 59 92Z" fill="#4a2008" opacity=".6"/>
</g></g>
<path d="M46.2 95L50 93.6L63 92.4L68 118.6H45.5Z" fill="#1b1814"/>
<path d="M39.6 47L43.6 66L46.4 92L48.4 95.4L52 93.6L53 68L56.4 47Z" fill="url(#nkb)"/>
<path d="M35 17C37.6 12.6 41.8 10.4 46.6 10.4C51.8 10.4 56.6 12.6 59 17C61 21 61.4 26 61.2 31C61 36 60.2 41 57.8 46C55.6 50 52 54.8 47.4 55.8C43.4 55.2 39.8 51 37.2 46.6C34.4 42 33 37 32.4 32C31.8 26 32.6 21 35 17Z" fill="url(#skb)"/>
<path d="M44 4C38 6 33 12 31 20C29.6 28 30.2 36 32.4 44C32.8 36 33 28 34.8 21C36.8 15 41 11.4 46 10Z" fill="#dda24e"/>
<path d="M48 4C56 5 62 10 64 18C65.6 26 64.8 36 61.2 46C61.8 38 62.2 30 61 23C59.8 16 55 11.4 47 10Z" fill="#bf7a36"/>
<ellipse cx="38.8" cy="28.6" rx="4.6" ry="2.8" fill="#b47a50" opacity=".38"/>
<ellipse cx="55" cy="29" rx="4.6" ry="2.8" fill="#b47a50" opacity=".42"/>
<path d="M57 34C59 38 58 44 54 50C58 46 61 40 61 32Z" fill="#b87850" opacity=".5"/>
<path d="M34.4 25.8Q38.4 23.8 42.8 25.6" stroke="#94643c" stroke-width="1.1" fill="none"/>
<path d="M50.8 25.8Q55.2 24 59.2 26" stroke="#94643c" stroke-width="1.1" fill="none"/>
<ellipse cx="38.6" cy="29.4" rx="3" ry="1.5" fill="#59402c"/>
<ellipse cx="55" cy="29.8" rx="3" ry="1.5" fill="#59402c"/>
<ellipse cx="38.6" cy="31.4" rx="3.4" ry="1.2" fill="#d9a07a" opacity=".7"/>
<ellipse cx="55" cy="31.8" rx="3.4" ry="1.2" fill="#d9a07a" opacity=".7"/>
<path d="M46.4 30C45.8 34 45.2 36.2 44.6 38.2Q47 39.6 49.6 38.2" stroke="#cc8e66" stroke-width=".9" fill="none"/>
<path d="M41.2 44Q44.4 42.2 46.6 43Q49 42.2 52.2 44Q47 47.6 41.2 44Z" fill="#c27668"/>
<path d="M40 50Q47 57 55 49" stroke="#c98a62" stroke-width="1" fill="none" opacity=".6"/>
<g clip-path="url(#hcb)">
<path d="M14.8 58.7 L13.9 60.9 L13.4 63.1 L13.2 65.3 L13.4 67.5 L13.6 69.7 L13.5 71.9 L12.9 74.1 L12.1 76.3 L11.2 78.5 L10.6 80.7 L10.4 82.9 L10.6 85.1 L10.8 87.3 L10.7 89.5 L10.2 91.7 L9.3 93.9 L8.4 96.1 L7.8 98.3 L7.6 100.5 L7.7 102.7" stroke="#fdea9e" stroke-width="1.3" fill="none" opacity=".5" stroke-linecap="round"/>
<path d="M17.3 54.9 L16.9 57.1 L16.8 59.3 L17.2 61.5 L17.6 63.7 L17.9 65.9 L17.8 68.1 L17.3 70.3 L16.7 72.5 L16.2 74.7 L16.0 76.9 L16.3 79.1 L16.7 81.3 L17.1 83.5 L17.1 85.7 L16.7 87.9 L16.0 90.1 L15.4 92.3 L15.2 94.5 L15.4 96.7 L15.8 98.9 L16.2 101.1 L16.3 103.3 L16.0 105.5 L15.4 107.7 L14.8 109.9 L14.4 112.1 L14.5 114.3 L14.9 116.5 L15.4 118.7" stroke="#fdea9e" stroke-width="2.1" fill="none" opacity=".5" stroke-linecap="round"/>
<path d="M40.3 80.6 L40.8 82.8 L41.5 85.0 L41.5 87.2 L40.7 89.4 L39.5 91.6 L38.8 93.8 L39.0 96.0 L39.6 98.2 L40.0 100.4 L39.6 102.6 L38.6 104.8 L37.5 107.0 L37.2 109.2 L37.7 111.4 L38.4 113.6" stroke="#e8952c" stroke-width="1.4" fill="none" opacity=".5" stroke-linecap="round"/>
<path d="M60.0 77.1 L60.6 79.3 L61.6 81.5 L62.6 83.7 L63.1 85.9 L63.0 88.1 L62.3 90.3 L61.6 92.5 L61.3 94.7 L61.7 96.9 L62.6 99.1 L63.7 101.3 L64.4 103.5 L64.5 105.7 L64.1 107.9 L63.3 110.1 L62.8 112.3 L62.8 114.5 L63.5 116.7 L64.6 118.9" stroke="#e07e22" stroke-width="2.1" fill="none" opacity=".5" stroke-linecap="round"/>
<path d="M18.6 64.2 L19.6 66.4 L20.5 68.6 L20.5 70.8 L19.4 73.0 L18.1 75.2 L17.3 77.4 L17.7 79.6 L18.7 81.8 L19.6 84.0 L19.4 86.2 L18.3 88.4 L17.0 90.6 L16.3 92.8 L16.8 95.0 L17.8 97.2 L18.6 99.4 L18.4 101.6 L17.2 103.8 L15.9 106.0 L15.3 108.2 L15.9 110.4 L16.9 112.6 L17.6 114.8 L17.3 117.0" stroke="#e8952c" stroke-width="1.7" fill="none" opacity=".5" stroke-linecap="round"/>
<path d="M58.0 78.2 L58.6 80.4 L59.4 82.6 L60.2 84.8 L60.7 87.0 L60.6 89.2 L60.1 91.4 L59.8 93.6 L59.9 95.8 L60.5 98.0 L61.3 100.2 L62.1 102.4 L62.5 104.6 L62.3 106.8 L61.9 109.0" stroke="#c45a12" stroke-width="1.7" fill="none" opacity=".5" stroke-linecap="round"/>
<path d="M26.2 64.3 L26.6 66.5 L26.3 68.7 L25.5 70.9 L24.9 73.1 L25.0 75.3 L25.6 77.5 L26.1 79.7 L26.0 81.9 L25.3 84.1 L24.6 86.3 L24.4 88.5 L24.9 90.7 L25.6 92.9 L25.7 95.1 L25.1 97.3 L24.3 99.5 L24.0 101.7 L24.3 103.9" stroke="#f2b43e" stroke-width="2.2" fill="none" opacity=".5" stroke-linecap="round"/>
<path d="M83.1 44.8 L83.3 47.0 L83.0 49.2 L82.4 51.4 L81.9 53.6 L81.7 55.8 L82.1 58.0 L82.9 60.2 L83.8 62.4 L84.4 64.6 L84.5 66.8 L84.0 69.0 L83.4 71.2 L83.0 73.4 L83.0 75.6" stroke="#f9d266" stroke-width="2.0" fill="none" opacity=".5" stroke-linecap="round"/>
<path d="M19.8 62.1 L18.9 64.3 L17.9 66.5 L17.2 68.7 L17.0 70.9 L17.2 73.1 L17.5 75.3 L17.9 77.5 L17.9 79.7 L17.4 81.9 L16.6 84.1 L15.6 86.3 L14.7 88.5 L14.2 90.7 L14.1 92.9 L14.4 95.1 L14.8 97.3 L15.0 99.5 L14.9 101.7 L14.3 103.9 L13.4 106.1 L12.4 108.3 L11.6 110.5" stroke="#f2b43e" stroke-width="2.6" fill="none" opacity=".5" stroke-linecap="round"/>
<path d="M84.4 44.6 L85.0 46.8 L84.7 49.0 L84.2 51.2 L83.9 53.4 L84.3 55.6 L85.4 57.8 L86.7 60.0 L87.5 62.2 L87.5 64.4 L87.0 66.6 L86.6 68.8 L86.7 71.0 L87.5 73.2 L88.8 75.4 L89.9 77.6 L90.2 79.8 L89.9 82.0 L89.3 84.2 L89.2 86.4 L89.8 88.6 L90.9 90.8 L92.2 93.0 L92.8 95.2 L92.7 97.4 L92.1 99.6 L91.8 101.8 L92.1 104.0 L93.1 106.2 L94.4 108.4" stroke="#f2b43e" stroke-width="1.4" fill="none" opacity=".5" stroke-linecap="round"/>
<path d="M56.3 64.4 L55.8 66.6 L55.1 68.8 L55.0 71.0 L55.8 73.2 L56.9 75.4 L57.6 77.6 L57.4 79.8 L56.7 82.0 L56.3 84.2 L56.6 86.4 L57.7 88.6 L58.7 90.8 L58.9 93.0 L58.4 95.2 L57.7 97.4 L57.7 99.6 L58.4 101.8 L59.5 104.0 L60.2 106.2 L60.1 108.4 L59.4 110.6 L58.9 112.8 L59.3 115.0" stroke="#d8701c" stroke-width="2.3" fill="none" opacity=".5" stroke-linecap="round"/>
<path d="M74.7 59.7 L75.3 61.9 L76.0 64.1 L76.8 66.3 L77.4 68.5 L77.7 70.7 L77.6 72.9 L77.5 75.1 L77.4 77.3 L77.5 79.5 L77.9 81.7 L78.6 83.9 L79.4 86.1 L80.1 88.3 L80.6 90.5 L80.7 92.7 L80.6 94.9 L80.5 97.1 L80.4 99.3 L80.7 101.5 L81.2 103.7 L82.0 105.9 L82.8 108.1 L83.4 110.3 L83.7 112.5 L83.8 114.7 L83.6 116.9 L83.5 119.1" stroke="#d8701c" stroke-width="1.8" fill="none" opacity=".5" stroke-linecap="round"/>
<path d="M24.9 49.2 L24.2 51.4 L23.9 53.6 L23.9 55.8 L24.1 58.0 L24.3 60.2 L24.3 62.4 L24.0 64.6 L23.3 66.8 L22.4 69.0 L21.6 71.2 L21.0 73.4 L20.7 75.6 L20.7 77.8 L20.9 80.0 L21.1 82.2 L21.1 84.4 L20.7 86.6 L20.0 88.8 L19.2 91.0 L18.3 93.2 L17.7 95.4" stroke="#fdea9e" stroke-width="1.2" fill="none" opacity=".5" stroke-linecap="round"/>
<path d="M14.0 47.8 L13.5 50.0 L12.8 52.2 L12.0 54.4 L11.4 56.6 L11.0 58.8 L10.9 61.0 L11.0 63.2 L11.2 65.4 L11.2 67.6 L10.8 69.8 L10.2 72.0 L9.5 74.2 L8.7 76.4 L8.2 78.6 L8.0 80.8 L8.0 83.0 L8.2 85.2 L8.3 87.4 L8.1 89.6 L7.6 91.8 L6.9 94.0 L6.1 96.2 L5.5 98.4 L5.1 100.6" stroke="#f2b43e" stroke-width="2.2" fill="none" opacity=".5" stroke-linecap="round"/>
<path d="M12.0 52.5 L12.2 54.7 L13.1 56.9 L14.0 59.1 L14.1 61.3 L13.3 63.5 L11.7 65.7 L10.2 67.9 L9.5 70.1 L9.8 72.3 L10.8 74.5 L11.6 76.7 L11.6 78.9 L10.6 81.1 L9.1 83.3 L7.7 85.5 L7.1 87.7 L7.5 89.9 L8.5 92.1 L9.2 94.3" stroke="#f2b43e" stroke-width="2.0" fill="none" opacity=".5" stroke-linecap="round"/>
<path d="M70.4 41.8 L71.3 44.0 L73.0 46.2 L74.5 48.4 L75.0 50.6 L74.4 52.8 L73.4 55.0 L72.8 57.2 L73.3 59.4 L74.8 61.6 L76.5 63.8 L77.4 66.0 L77.2 68.2 L76.2 70.4 L75.4 72.6 L75.5 74.8 L76.6 77.0 L78.3 79.2 L79.6 81.4 L79.9 83.6 L79.1 85.8 L78.1 88.0 L77.8 90.2 L78.6 92.4 L80.2 94.6 L81.7 96.8 L82.4 99.0" stroke="#e8952c" stroke-width="2.8" fill="none" opacity=".5" stroke-linecap="round"/>
<path d="M76.9 43.9 L77.7 46.1 L78.8 48.3 L79.5 50.5 L79.4 52.7 L78.6 54.9 L78.0 57.1 L78.3 59.3 L79.3 61.5 L80.3 63.7 L80.7 65.9 L80.2 68.1 L79.4 70.3 L79.1 72.5 L79.7 74.7 L80.8 76.9 L81.7 79.1 L81.7 81.3 L81.0 83.5 L80.3 85.7 L80.4 87.9 L81.3 90.1 L82.4 92.3 L82.9 94.5 L82.5 96.7 L81.7 98.9 L81.3 101.1 L81.8 103.3" stroke="#e8952c" stroke-width="2.2" fill="none" opacity=".5" stroke-linecap="round"/>
<path d="M81.9 62.8 L82.0 65.0 L81.6 67.2 L81.2 69.4 L81.3 71.6 L82.0 73.8 L83.1 76.0 L83.9 78.2 L84.0 80.4 L83.6 82.6 L83.2 84.8 L83.3 87.0 L84.1 89.2 L85.2 91.4 L85.9 93.6 L86.0 95.8 L85.5 98.0 L85.1 100.2 L85.4 102.4 L86.2 104.6 L87.3 106.8" stroke="#d8701c" stroke-width="1.8" fill="none" opacity=".5" stroke-linecap="round"/>
<path d="M10.5 44.6 L11.0 46.8 L11.4 49.0 L11.3 51.2 L10.8 53.4 L10.0 55.6 L9.2 57.8 L8.7 60.0 L8.7 62.2 L9.1 64.4 L9.6 66.6 L9.8 68.8 L9.7 71.0 L9.0 73.2 L8.2 75.4 L7.5 77.6 L7.1 79.8 L7.2 82.0 L7.7 84.2 L8.1 86.4 L8.3 88.6 L8.0 90.8 L7.3 93.0 L6.4 95.2 L5.8 97.4 L5.5 99.6 L5.8 101.8 L6.2 104.0 L6.7 106.2 L6.7 108.4 L6.3 110.6 L5.5 112.8" stroke="#f2b43e" stroke-width="2.7" fill="none" opacity=".5" stroke-linecap="round"/>
<path d="M16.3 42.6 L17.0 44.8 L17.8 47.0 L18.0 49.2 L17.5 51.4 L16.7 53.6 L16.3 55.8 L16.6 58.0 L17.4 60.2 L18.0 62.4 L18.1 64.6 L17.5 66.8 L16.7 69.0 L16.5 71.2 L16.9 73.4 L17.7 75.6 L18.3 77.8 L18.1 80.0 L17.4 82.2 L16.7 84.4 L16.7 86.6 L17.3 88.8 L18.1 91.0 L18.5 93.2 L18.1 95.4" stroke="#e8952c" stroke-width="2.7" fill="none" opacity=".5" stroke-linecap="round"/>
<path d="M31.0 62.9 L30.3 65.1 L29.7 67.3 L29.6 69.5 L29.9 71.7 L30.7 73.9 L31.4 76.1 L31.8 78.3 L31.6 80.5 L31.0 82.7 L30.3 84.9 L29.8 87.1 L29.7 89.3 L30.2 91.5 L31.0 93.7 L31.6 95.9 L31.9 98.1 L31.7 100.3" stroke="#d8701c" stroke-width="1.3" fill="none" opacity=".5" stroke-linecap="round"/>
<path d="M79.1 51.6 L80.5 53.8 L80.7 56.0 L79.9 58.2 L79.1 60.4 L79.4 62.6 L80.9 64.8 L82.6 67.0 L83.1 69.2 L82.5 71.4 L81.5 73.6 L81.5 75.8 L82.8 78.0 L84.5 80.2 L85.5 82.4 L85.0 84.6 L84.0 86.8" stroke="#f6c455" stroke-width="2.6" fill="none" opacity=".5" stroke-linecap="round"/>
<path d="M59.9 83.5 L60.9 85.7 L61.1 87.9 L60.4 90.1 L59.3 92.3 L58.5 94.5 L58.6 96.7 L59.5 98.9 L60.6 101.1 L61.1 103.3 L60.7 105.5 L59.6 107.7 L58.6 109.9 L58.4 112.1 L59.1 114.3 L60.2 116.5 L61.0 118.7" stroke="#e8952c" stroke-width="2.0" fill="none" opacity=".5" stroke-linecap="round"/>
<path d="M70.8 67.1 L70.4 69.3 L69.1 71.5 L68.1 73.7 L68.2 75.9 L69.4 78.1 L70.8 80.3 L71.3 82.5 L70.5 84.7 L69.2 86.9 L68.5 89.1 L68.9 91.3 L70.2 93.5 L71.4 95.7 L71.6 97.9 L70.7 100.1 L69.4 102.3 L68.9 104.5 L69.5 106.7" stroke="#c45a12" stroke-width="1.6" fill="none" opacity=".5" stroke-linecap="round"/>
<path d="M14.7 68.6 L13.9 70.8 L13.3 73.0 L13.3 75.2 L13.9 77.4 L14.7 79.6 L15.3 81.8 L15.3 84.0 L14.7 86.2 L13.9 88.4 L13.4 90.6 L13.5 92.8 L14.2 95.0 L15.1 97.2 L15.6 99.4 L15.4 101.6 L14.7 103.8 L14.0 106.0 L13.6 108.2 L13.8 110.4 L14.6 112.6 L15.4 114.8 L15.8 117.0 L15.5 119.2" stroke="#f9d266" stroke-width="2.1" fill="none" opacity=".5" stroke-linecap="round"/>
<path d="M54.9 64.4 L55.2 66.6 L55.7 68.8 L56.3 71.0 L56.8 73.2 L57.0 75.4 L57.0 77.6 L56.7 79.8 L56.4 82.0 L56.2 84.2 L56.4 86.4 L56.9 88.6 L57.5 90.8 L58.0 93.0 L58.3 95.2 L58.3 97.4 L58.0 99.6" stroke="#e8952c" stroke-width="1.7" fill="none" opacity=".5" stroke-linecap="round"/>
<path d="M72.5 63.8 L72.9 66.0 L73.5 68.2 L74.1 70.4 L74.4 72.6 L74.2 74.8 L73.6 77.0 L73.2 79.2 L73.0 81.4 L73.2 83.6 L73.8 85.8 L74.5 88.0 L74.8 90.2 L74.7 92.4 L74.2 94.6 L73.7 96.8 L73.4 99.0 L73.6 101.2 L74.2 103.4" stroke="#f6c455" stroke-width="1.9" fill="none" opacity=".5" stroke-linecap="round"/>
<path d="M38.5 67.8 L37.2 70.0 L36.4 72.2 L36.6 74.4 L37.4 76.6 L38.4 78.8 L38.7 81.0 L38.2 83.2 L37.0 85.4 L35.5 87.6 L34.5 89.8 L34.3 92.0 L34.9 94.2 L35.9 96.4 L36.6 98.6 L36.4 100.8 L35.4 103.0 L34.0 105.2" stroke="#c45a12" stroke-width="2.0" fill="none" opacity=".5" stroke-linecap="round"/>
<path d="M27.3 67.3 L25.9 69.5 L24.8 71.7 L24.3 73.9 L24.3 76.1 L24.9 78.3 L25.7 80.5 L26.2 82.7 L26.1 84.9 L25.3 87.1 L24.1 89.3 L22.8 91.5 L21.8 93.7 L21.5 95.9 L21.7 98.1 L22.4 100.3 L23.1 102.5 L23.5 104.7 L23.1 106.9 L22.2 109.1 L20.9 111.3 L19.7 113.5 L18.9 115.7 L18.7 117.9" stroke="#e8952c" stroke-width="1.4" fill="none" opacity=".5" stroke-linecap="round"/>
<path d="M13.0 43.1 L13.1 45.3 L12.9 47.5 L12.4 49.7 L11.9 51.9 L11.7 54.1 L11.8 56.3 L12.3 58.5 L12.9 60.7 L13.2 62.9 L13.2 65.1 L12.9 67.3 L12.4 69.5 L11.9 71.7 L11.8 73.9 L12.1 76.1 L12.7 78.3 L13.2 80.5 L13.5 82.7 L13.3 84.9 L12.9 87.1 L12.4 89.3 L12.0 91.5 L12.1 93.7 L12.5 95.9 L13.0 98.1 L13.5 100.3 L13.6 102.5" stroke="#f2b43e" stroke-width="1.4" fill="none" opacity=".5" stroke-linecap="round"/>
<path d="M85.5 42.3 L86.9 44.5 L88.6 46.7 L89.7 48.9 L89.7 51.1 L88.8 53.3 L88.0 55.5 L87.9 57.7 L88.9 59.9 L90.5 62.1 L92.0 64.3 L92.6 66.5 L92.1 68.7 L91.2 70.9 L90.6 73.1 L91.0 75.3 L92.4 77.5 L94.1 79.7 L95.2 81.9 L95.3 84.1 L94.5 86.3 L93.6 88.5 L93.4 90.7" stroke="#f2b43e" stroke-width="2.3" fill="none" opacity=".5" stroke-linecap="round"/>
<path d="M68.6 50.0 L67.7 52.2 L67.4 54.4 L68.2 56.6 L69.2 58.8 L69.8 61.0 L69.4 63.2 L68.4 65.4 L67.9 67.6 L68.4 69.8 L69.5 72.0 L70.3 74.2 L70.1 76.4 L69.2 78.6 L68.5 80.8 L68.7 83.0 L69.7 85.2 L70.6 87.4 L70.8 89.6 L70.0 91.8 L69.2 94.0" stroke="#e8952c" stroke-width="1.8" fill="none" opacity=".5" stroke-linecap="round"/>
<path d="M65.2 70.5 L65.8 72.7 L66.2 74.9 L66.2 77.1 L66.0 79.3 L65.9 81.5 L65.9 83.7 L66.2 85.9 L66.9 88.1 L67.7 90.3 L68.5 92.5 L69.1 94.7 L69.3 96.9 L69.3 99.1 L69.1 101.3 L68.9 103.5 L69.1 105.7 L69.5 107.9" stroke="#c45a12" stroke-width="1.3" fill="none" opacity=".5" stroke-linecap="round"/>
<path d="M64.8 38.9 L65.1 41.1 L64.9 43.3 L64.3 45.5 L63.7 47.7 L63.2 49.9 L63.1 52.1 L63.5 54.3 L64.2 56.5 L64.9 58.7 L65.4 60.9 L65.5 63.1 L65.2 65.3 L64.6 67.5 L63.9 69.7 L63.6 71.9 L63.6 74.1 L64.1 76.3 L64.9 78.5 L65.6 80.7 L66.0 82.9 L65.9 85.1 L65.4 87.3 L64.8 89.5 L64.2 91.7 L64.0 93.9 L64.2 96.1 L64.9 98.3 L65.6 100.5" stroke="#e07e22" stroke-width="2.3" fill="none" opacity=".5" stroke-linecap="round"/>
<path d="M10.8 60.2 L11.5 62.4 L12.4 64.6 L12.7 66.8 L11.8 69.0 L10.7 71.2 L10.2 73.4 L10.7 75.6 L11.7 77.8 L12.1 80.0 L11.5 82.2 L10.3 84.4 L9.6 86.6 L9.9 88.8 L10.9 91.0 L11.5 93.2 L11.1 95.4 L10.0 97.6 L9.1 99.8 L9.2 102.0 L10.1 104.2 L10.9 106.4 L10.7 108.6 L9.6 110.8 L8.6 113.0 L8.5 115.2 L9.3 117.4 L10.2 119.6" stroke="#fdea9e" stroke-width="2.2" fill="none" opacity=".5" stroke-linecap="round"/>
<path d="M18.0 38.6 L17.8 40.8 L17.9 43.0 L18.2 45.2 L18.7 47.4 L19.1 49.6 L19.3 51.8 L19.3 54.0 L19.0 56.2 L18.6 58.4 L18.3 60.6 L18.1 62.8 L18.2 65.0 L18.5 67.2 L19.0 69.4 L19.4 71.6 L19.6 73.8 L19.6 76.0 L19.3 78.2 L18.9 80.4 L18.5 82.6 L18.4 84.8" stroke="#fdea9e" stroke-width="2.0" fill="none" opacity=".5" stroke-linecap="round"/>
<path d="M12.8 40.1 L12.9 42.3 L13.3 44.5 L13.5 46.7 L13.1 48.9 L12.3 51.1 L11.5 53.3 L11.1 55.5 L11.3 57.7 L11.8 59.9 L11.9 62.1 L11.3 64.3 L10.4 66.5 L9.7 68.7 L9.5 70.9 L9.8 73.1 L10.2 75.3 L10.2 77.5 L9.5 79.7 L8.6 81.9" stroke="#f2b43e" stroke-width="1.9" fill="none" opacity=".5" stroke-linecap="round"/>
<path d="M63.7 64.5 L65.4 66.7 L65.8 68.9 L64.7 71.1 L63.3 73.3 L63.1 75.5 L64.5 77.7 L66.3 79.9 L66.8 82.1 L65.7 84.3 L64.3 86.5 L64.0 88.7 L65.3 90.9 L67.1 93.1" stroke="#e07e22" stroke-width="1.6" fill="none" opacity=".5" stroke-linecap="round"/>
<path d="M32.3 75.8 L32.0 78.0 L31.2 80.2 L30.1 82.4 L29.2 84.6 L28.6 86.8 L28.6 89.0 L29.0 91.2 L29.6 93.4 L30.0 95.6 L29.9 97.8 L29.4 100.0 L28.4 102.2 L27.4 104.4 L26.6 106.6 L26.3 108.8 L26.5 111.0 L27.0 113.2 L27.5 115.4 L27.7 117.6 L27.5 119.8" stroke="#e8952c" stroke-width="1.7" fill="none" opacity=".5" stroke-linecap="round"/>
<path d="M78.8 58.2 L79.4 60.4 L79.2 62.6 L78.4 64.8 L77.6 67.0 L77.2 69.2 L77.6 71.4 L78.4 73.6 L79.2 75.8 L79.3 78.0 L78.7 80.2 L77.8 82.4 L77.2 84.6 L77.3 86.8 L78.1 89.0" stroke="#e8952c" stroke-width="1.9" fill="none" opacity=".5" stroke-linecap="round"/>
<path d="M32.8 72.1 L32.5 74.3 L31.3 76.5 L29.8 78.7 L28.4 80.9 L27.9 83.1 L28.2 85.3 L29.0 87.5 L29.8 89.7 L29.8 91.9 L28.9 94.1 L27.4 96.3 L25.9 98.5 L25.0 100.7 L25.0 102.9 L25.8 105.1 L26.6 107.3 L26.9 109.5 L26.3 111.7 L25.0 113.9 L23.4 116.1 L22.3 118.3" stroke="#d8701c" stroke-width="1.9" fill="none" opacity=".5" stroke-linecap="round"/>
<path d="M40.8 73.1 L41.1 75.3 L41.2 77.5 L41.0 79.7 L40.4 81.9 L39.6 84.1 L38.9 86.3 L38.3 88.5 L38.2 90.7 L38.3 92.9 L38.7 95.1 L39.0 97.3 L39.1 99.5 L38.8 101.7 L38.2 103.9 L37.4 106.1 L36.6 108.3 L36.2 110.5 L36.0 112.7 L36.2 114.9" stroke="#c45a12" stroke-width="1.3" fill="none" opacity=".5" stroke-linecap="round"/>
<path d="M31.5 78.6 L30.9 80.8 L30.3 83.0 L29.9 85.2 L29.8 87.4 L30.1 89.6 L30.5 91.8 L30.8 94.0 L30.9 96.2 L30.5 98.4 L30.0 100.6 L29.3 102.8 L28.9 105.0 L28.7 107.2 L28.9 109.4 L29.3 111.6 L29.7 113.8" stroke="#d8701c" stroke-width="1.7" fill="none" opacity=".5" stroke-linecap="round"/>
<path d="M29.7 54.1 L28.7 56.3 L27.8 58.5 L27.3 60.7 L27.6 62.9 L28.5 65.1 L29.6 67.3 L30.2 69.5 L30.2 71.7 L29.4 73.9 L28.4 76.1 L27.6 78.3 L27.5 80.5 L28.1 82.7 L29.1 84.9 L30.0 87.1 L30.4 89.3 L30.0 91.5 L29.1 93.7 L28.1 95.9 L27.6 98.1 L27.7 100.3 L28.5 102.5 L29.6 104.7 L30.4 106.9 L30.5 109.1 L29.8 111.3" stroke="#f2b43e" stroke-width="2.4" fill="none" opacity=".5" stroke-linecap="round"/>
<path d="M19.5 57.5 L18.8 59.7 L18.1 61.9 L17.8 64.1 L17.8 66.3 L18.2 68.5 L18.6 70.7 L18.8 72.9 L18.7 75.1 L18.3 77.3 L17.6 79.5 L16.9 81.7 L16.5 83.9 L16.4 86.1 L16.7 88.3 L17.1 90.5 L17.4 92.7 L17.4 94.9 L17.1 97.1 L16.4 99.3 L15.7 101.5 L15.2 103.7 L15.0 105.9 L15.2 108.1 L15.6 110.3 L16.0 112.5 L16.1 114.7" stroke="#f9d266" stroke-width="2.7" fill="none" opacity=".5" stroke-linecap="round"/>
<path d="M73.6 64.9 L74.3 67.1 L74.9 69.3 L75.2 71.5 L75.1 73.7 L74.9 75.9 L74.7 78.1 L74.8 80.3 L75.2 82.5 L75.9 84.7 L76.7 86.9 L77.2 89.1 L77.3 91.3 L77.2 93.5 L76.9 95.7 L76.8 97.9 L77.0 100.1 L77.6 102.3 L78.3 104.5 L79.0 106.7 L79.4 108.9 L79.5 111.1 L79.3 113.3 L79.0 115.5 L79.0 117.7 L79.3 119.9" stroke="#f2b43e" stroke-width="1.3" fill="none" opacity=".5" stroke-linecap="round"/>
<path d="M31.5 69.0 L30.9 71.2 L29.6 73.4 L28.8 75.6 L29.1 77.8 L30.1 80.0 L30.7 82.2 L30.2 84.4 L28.9 86.6 L28.0 88.8 L28.2 91.0 L29.1 93.2 L29.8 95.4 L29.4 97.6" stroke="#d8701c" stroke-width="1.2" fill="none" opacity=".5" stroke-linecap="round"/>
<path d="M80.9 53.1 L80.9 55.3 L80.3 57.5 L79.7 59.7 L79.5 61.9 L79.9 64.1 L80.9 66.3 L82.0 68.5 L82.9 70.7 L83.2 72.9 L82.9 75.1 L82.3 77.3 L81.8 79.5 L81.8 81.7 L82.5 83.9" stroke="#f9d266" stroke-width="2.6" fill="none" opacity=".5" stroke-linecap="round"/>
<path d="M35.3 75.6 L35.0 77.8 L34.3 80.0 L33.6 82.2 L33.2 84.4 L33.3 86.6 L33.9 88.8 L34.6 91.0 L35.3 93.2 L35.6 95.4 L35.4 97.6 L34.8 99.8 L34.0 102.0 L33.5 104.2 L33.4 106.4 L33.9 108.6" stroke="#f2b43e" stroke-width="2.2" fill="none" opacity=".5" stroke-linecap="round"/>
<path d="M58.1 66.1 L58.9 68.3 L58.7 70.5 L57.6 72.7 L56.3 74.9 L55.8 77.1 L56.3 79.3 L57.5 81.5 L58.4 83.7 L58.3 85.9 L57.3 88.1 L56.1 90.3 L55.4 92.5 L55.8 94.7 L56.9 96.9 L57.8 99.1 L58.0 101.3 L57.1 103.5 L55.8 105.7 L55.0 107.9 L55.2 110.1 L56.2 112.3 L57.3 114.5 L57.6 116.7" stroke="#c45a12" stroke-width="2.8" fill="none" opacity=".5" stroke-linecap="round"/>
<path d="M16.9 52.6 L18.0 54.8 L18.3 57.0 L17.6 59.2 L16.3 61.4 L15.4 63.6 L15.6 65.8 L16.5 68.0 L17.7 70.2 L18.0 72.4 L17.4 74.6 L16.2 76.8 L15.2 79.0 L15.3 81.2 L16.2 83.4 L17.3 85.6 L17.8 87.8 L17.2 90.0 L16.0 92.2 L15.0 94.4 L15.0 96.6 L15.8 98.8 L17.0 101.0" stroke="#f9d266" stroke-width="1.7" fill="none" opacity=".5" stroke-linecap="round"/>
<path d="M25.6 45.0 L25.1 47.2 L24.7 49.4 L24.6 51.6 L24.9 53.8 L25.5 56.0 L26.1 58.2 L26.4 60.4 L26.1 62.6 L25.6 64.8 L25.2 67.0 L25.1 69.2 L25.4 71.4 L26.0 73.6 L26.6 75.8 L26.9 78.0 L26.6 80.2 L26.1 82.4 L25.7 84.6 L25.6 86.8 L25.9 89.0 L26.5 91.2 L27.1 93.4 L27.4 95.6 L27.1 97.8 L26.6 100.0 L26.2 102.2 L26.1 104.4 L26.4 106.6 L27.1 108.8 L27.6 111.0 L27.9 113.2" stroke="#f9d266" stroke-width="1.3" fill="none" opacity=".5" stroke-linecap="round"/>
<path d="M34.9 68.6 L33.7 70.8 L32.5 73.0 L31.7 75.2 L31.5 77.4 L31.9 79.6 L32.5 81.8 L32.9 84.0 L32.5 86.2 L31.6 88.4 L30.3 90.6 L29.3 92.8 L28.7 95.0 L28.9 97.2 L29.5 99.4 L30.0 101.6 L30.0 103.8 L29.4 106.0 L28.2 108.2" stroke="#c45a12" stroke-width="2.6" fill="none" opacity=".5" stroke-linecap="round"/>
<path d="M11.8 34.1 L10.7 36.3 L9.5 38.5 L8.7 40.7 L8.6 42.9 L9.1 45.1 L9.7 47.3 L9.8 49.5 L9.1 51.7 L8.0 53.9 L6.8 56.1 L6.2 58.3 L6.3 60.5 L6.9 62.7 L7.4 64.9 L7.3 67.1 L6.5 69.3 L5.2 71.5 L4.2 73.7 L3.7 75.9" stroke="#f2b43e" stroke-width="1.4" fill="none" opacity=".5" stroke-linecap="round"/>
<path d="M19.3 46.9 L19.1 49.1 L19.3 51.3 L19.6 53.5 L19.8 55.7 L19.6 57.9 L19.0 60.1 L18.1 62.3 L17.0 64.5 L16.1 66.7 L15.6 68.9 L15.5 71.1 L15.7 73.3 L16.1 75.5 L16.2 77.7 L15.9 79.9 L15.2 82.1 L14.2 84.3" stroke="#f2b43e" stroke-width="1.8" fill="none" opacity=".5" stroke-linecap="round"/>
<path d="M41.0 68.7 L41.5 70.9 L42.1 73.1 L42.1 75.3 L41.3 77.5 L40.0 79.7 L38.9 81.9 L38.7 84.1 L39.1 86.3 L39.7 88.5 L39.8 90.7 L39.0 92.9 L37.7 95.1 L36.7 97.3 L36.3 99.5" stroke="#d8701c" stroke-width="2.2" fill="none" opacity=".5" stroke-linecap="round"/>
<path d="M39.6 67.6 L39.6 69.8 L40.2 72.0 L40.8 74.2 L41.0 76.4 L40.6 78.6 L39.6 80.8 L38.3 83.0 L37.1 85.2 L36.3 87.4 L36.3 89.6 L36.8 91.8 L37.4 94.0 L37.7 96.2 L37.4 98.4 L36.5 100.6 L35.2 102.8 L33.9 105.0 L33.1 107.2 L33.0 109.4 L33.4 111.6 L34.1 113.8" stroke="#c45a12" stroke-width="2.7" fill="none" opacity=".5" stroke-linecap="round"/>
<path d="M72.5 61.3 L72.6 63.5 L73.1 65.7 L73.8 67.9 L74.6 70.1 L75.2 72.3 L75.4 74.5 L75.3 76.7 L75.1 78.9 L74.9 81.1 L75.0 83.3 L75.5 85.5 L76.3 87.7 L77.0 89.9 L77.6 92.1 L77.8 94.3 L77.6 96.5 L77.4 98.7 L77.3 100.9 L77.4 103.1 L77.9 105.3 L78.7 107.5" stroke="#e8952c" stroke-width="2.0" fill="none" opacity=".5" stroke-linecap="round"/>
<path d="M72.2 40.5 L72.3 42.7 L73.2 44.9 L74.4 47.1 L75.3 49.3 L75.3 51.5 L74.7 53.7 L74.1 55.9 L74.1 58.1 L75.0 60.3 L76.2 62.5 L77.1 64.7 L77.2 66.9 L76.6 69.1 L75.9 71.3 L75.9 73.5 L76.7 75.7 L78.0 77.9 L78.9 80.1" stroke="#d8701c" stroke-width="2.2" fill="none" opacity=".5" stroke-linecap="round"/>
<path d="M27.9 49.0 L27.2 51.2 L27.1 53.4 L27.7 55.6 L28.5 57.8 L28.8 60.0 L28.4 62.2 L27.7 64.4 L27.2 66.6 L27.4 68.8 L28.2 71.0 L28.9 73.2 L28.9 75.4 L28.3 77.6 L27.6 79.8 L27.4 82.0 L27.9 84.2 L28.7 86.4" stroke="#f9d266" stroke-width="1.9" fill="none" opacity=".5" stroke-linecap="round"/>
<path d="M35.0 73.1 L33.9 75.3 L33.0 77.5 L32.7 79.7 L33.2 81.9 L33.8 84.1 L33.8 86.3 L33.1 88.5 L32.0 90.7 L31.3 92.9 L31.3 95.1 L31.9 97.3 L32.3 99.5 L32.1 101.7 L31.1 103.9 L30.1 106.1 L29.6 108.3 L29.9 110.5 L30.6 112.7 L30.8 114.9 L30.2 117.1 L29.2 119.3" stroke="#e8952c" stroke-width="2.6" fill="none" opacity=".5" stroke-linecap="round"/>
<path d="M69.8 49.7 L69.2 51.9 L68.2 54.1 L67.4 56.3 L67.3 58.5 L68.0 60.7 L69.0 62.9 L69.5 65.1 L69.3 67.3 L68.4 69.5 L67.4 71.7 L67.0 73.9 L67.4 76.1 L68.3 78.3 L69.1 80.5 L69.2 82.7 L68.6 84.9 L67.5 87.1 L66.8 89.3 L66.8 91.5" stroke="#c45a12" stroke-width="1.4" fill="none" opacity=".5" stroke-linecap="round"/>
<path d="M76.1 66.8 L75.4 69.0 L75.1 71.2 L75.5 73.4 L76.3 75.6 L77.1 77.8 L77.3 80.0 L76.9 82.2 L76.2 84.4 L75.9 86.6 L76.2 88.8 L77.1 91.0 L77.9 93.2 L78.1 95.4 L77.7 97.6 L77.0 99.8 L76.6 102.0 L77.0 104.2 L77.8 106.4" stroke="#e8952c" stroke-width="2.6" fill="none" opacity=".5" stroke-linecap="round"/>
<path d="M56.7 77.0 L55.5 79.2 L54.3 81.4 L53.9 83.6 L54.5 85.8 L55.7 88.0 L56.6 90.2 L56.8 92.4 L56.0 94.6 L54.7 96.8 L53.7 99.0 L53.5 101.2 L54.2 103.4 L55.3 105.6 L56.2 107.8 L56.2 110.0 L55.3 112.2 L54.0 114.4 L53.1 116.6 L53.0 118.8" stroke="#e07e22" stroke-width="2.8" fill="none" opacity=".5" stroke-linecap="round"/>
</g>
</g></g></svg><!--/P2-->

<!-- ============ ANNOTATION ============ -->
<svg style="left:0;top:0" width="800" height="497" viewBox="0 0 800 497"><rect x="655.2" y="354.1" width="24.4" height="29.4" rx="1.2" fill="none" stroke="#cf221d" stroke-width="1.9"/></svg>
<svg style="left:0;top:0" width="800" height="497" viewBox="0 0 800 497">
  <path d="M767.32 178.06L684.55 343.55L686.95 344.25L681.4 346.85L680.15 340.75L682.05 342.25L767.08 177.94Z" fill="#c8221b"/>
</svg>

</body>
</html>
